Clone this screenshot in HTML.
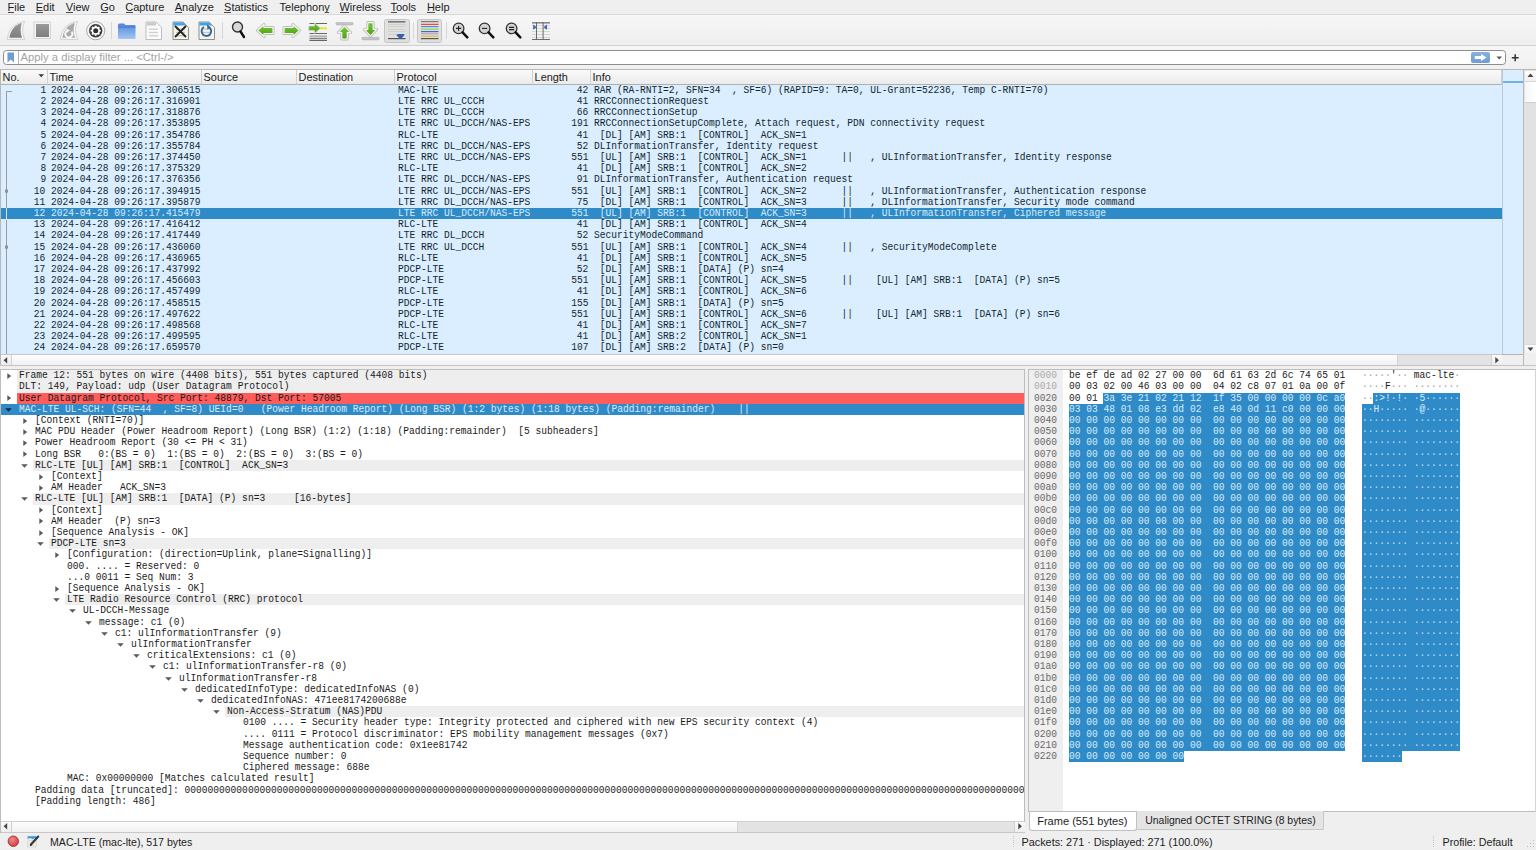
<!DOCTYPE html>
<html><head><meta charset="utf-8"><style>
*{box-sizing:border-box}
html,body{margin:0;padding:0}
body{width:1536px;height:850px;overflow:hidden;position:relative;background:#efefef;font-family:"Liberation Sans",sans-serif;color:#1b1b1b}
.abs{position:absolute}
.mono{font-family:"Liberation Mono",monospace;font-size:10.3px;white-space:pre;transform:scaleX(0.9311);transform-origin:0 0}
.mr{transform-origin:100% 0}
.menu{position:absolute;top:1px;font-size:11px;line-height:13px;color:#1c1c1c}
.menu u{text-decoration:underline;text-decoration-thickness:1px;text-underline-offset:-0.5px;text-decoration-color:#444}
.hdr{position:absolute;top:70px;height:14.5px;background:linear-gradient(#fafafa,#ebebeb);border-right:1px solid #d0d0d0;border-bottom:1px solid #b0b0b0;font-size:10.9px;line-height:15px;padding-left:1.6px;color:#1a1a1a}
.pr{position:absolute;left:1px;width:1501px;height:11.2px;line-height:11.2px}
.pr span{position:absolute;top:0}
.dr{position:absolute;height:11.2px;line-height:11.2px}
.arr{position:absolute;width:0;height:0}
</style></head><body>

<div class="menu" style="left:7.5px">File</div>
<div class="abs" style="left:7.80px;top:12px;width:6.12px;height:1px;background:#4a4a4a"></div>
<div class="menu" style="left:35.699999999999996px">Edit</div>
<div class="abs" style="left:36.00px;top:12px;width:6.74px;height:1px;background:#4a4a4a"></div>
<div class="menu" style="left:65.80000000000001px">View</div>
<div class="abs" style="left:66.10px;top:12px;width:6.74px;height:1px;background:#4a4a4a"></div>
<div class="menu" style="left:100.2px">Go</div>
<div class="abs" style="left:100.50px;top:12px;width:7.96px;height:1px;background:#4a4a4a"></div>
<div class="menu" style="left:125.2px">Capture</div>
<div class="abs" style="left:125.50px;top:12px;width:7.34px;height:1px;background:#4a4a4a"></div>
<div class="menu" style="left:174.70000000000002px">Analyze</div>
<div class="abs" style="left:175.00px;top:12px;width:6.74px;height:1px;background:#4a4a4a"></div>
<div class="menu" style="left:224.1px">Statistics</div>
<div class="abs" style="left:224.40px;top:12px;width:6.74px;height:1px;background:#4a4a4a"></div>
<div class="menu" style="left:279.59999999999997px">Telephony</div>
<div class="abs" style="left:324.55px;top:12px;width:4.90px;height:1px;background:#4a4a4a"></div>
<div class="menu" style="left:339.4px">Wireless</div>
<div class="abs" style="left:339.70px;top:12px;width:9.78px;height:1px;background:#4a4a4a"></div>
<div class="menu" style="left:390.4px">Tools</div>
<div class="abs" style="left:390.70px;top:12px;width:6.12px;height:1px;background:#4a4a4a"></div>
<div class="menu" style="left:426.9px">Help</div>
<div class="abs" style="left:427.20px;top:12px;width:7.34px;height:1px;background:#4a4a4a"></div>
<div class="abs" style="left:0;top:14px;width:1536px;height:1px;background:#d9d9d9"></div>
<div class="abs" style="left:0;top:15px;width:1536px;height:30px;background:linear-gradient(#f7f7f7,#eeeeee)"></div>
<div class="abs" style="left:0;top:44.8px;width:1536px;height:1.4px;background:#d0d0d0"></div>
<svg class="abs" style="left:0;top:0" width="0" height="0"><defs>
<linearGradient id="gfin" x1="0" y1="0" x2="0" y2="1"><stop offset="0" stop-color="#9a9a9a"/><stop offset="1" stop-color="#7e7e7e"/></linearGradient>
<linearGradient id="gfold" x1="0" y1="0" x2="0" y2="1"><stop offset="0" stop-color="#4f86d6"/><stop offset="1" stop-color="#a4c6f6"/></linearGradient>
<linearGradient id="ggreen" x1="0" y1="0" x2="0" y2="1"><stop offset="0" stop-color="#76c83a"/><stop offset="1" stop-color="#4d9e10"/></linearGradient>
<linearGradient id="gbtn" x1="0" y1="0" x2="0" y2="1"><stop offset="0" stop-color="#e6e6e6"/><stop offset="1" stop-color="#dadada"/></linearGradient>
</defs></svg>
<svg class="abs" style="left:7px;top:21px" width="19" height="19" viewBox="0 0 19 19"><path d="M0.4,18.4 C1,9 7,2 17.8,0.3 C15,6 14.8,12 17.8,18.4 Z" fill="#f7f7f7" stroke="#cdcdcd" stroke-width="0.9" stroke-linejoin="round"/><path d="M2.4,16.8 C3.5,9 8,3.5 14.8,1.9 C13.3,7 13.2,12 15.1,16.8 Z" fill="url(#gfin)"/></svg>
<svg class="abs" style="left:33px;top:21px" width="19" height="19" viewBox="0 0 19 19"><rect x="1" y="1" width="16.5" height="16.5" fill="#f4f4f4" stroke="#d4d4d4" stroke-width="1"/><rect x="3" y="3" width="13" height="13" fill="url(#gfin)"/></svg>
<svg class="abs" style="left:60px;top:21px" width="19" height="19" viewBox="0 0 19 19"><path d="M0.4,18.4 C1,9 7,2 17.8,0.3 C15,6 14.8,12 17.8,18.4 Z" fill="#f7f7f7" stroke="#cdcdcd" stroke-width="0.9" stroke-linejoin="round"/><path d="M2.4,16.8 C3.5,9 8,3.5 14.8,1.9 C13.3,7 13.2,12 15.1,16.8 Z" fill="#aaaaaa"/><path d="M11.6,10.6 A3.6,3.6 0 1 1 7.4,9.6" fill="none" stroke="#f8f8f8" stroke-width="2"/><path d="M6,7.6 L10,9.2 L6.6,12 Z" fill="#f8f8f8"/></svg>
<svg class="abs" style="left:85.5px;top:20.5px" width="20" height="20" viewBox="0 0 20 20"><circle cx="9.7" cy="9.7" r="9.1" fill="#f4f4f4" stroke="#a8a8a8" stroke-width="1"/><circle cx="9.7" cy="9.7" r="6.7" fill="#3a3a3a"/><rect x="8.8" y="4.6" width="1.8" height="2.2" fill="#fff" transform="rotate(0 9.7 9.7)"/><rect x="8.8" y="4.6" width="1.8" height="2.2" fill="#fff" transform="rotate(45 9.7 9.7)"/><rect x="8.8" y="4.6" width="1.8" height="2.2" fill="#fff" transform="rotate(90 9.7 9.7)"/><rect x="8.8" y="4.6" width="1.8" height="2.2" fill="#fff" transform="rotate(135 9.7 9.7)"/><rect x="8.8" y="4.6" width="1.8" height="2.2" fill="#fff" transform="rotate(180 9.7 9.7)"/><rect x="8.8" y="4.6" width="1.8" height="2.2" fill="#fff" transform="rotate(225 9.7 9.7)"/><rect x="8.8" y="4.6" width="1.8" height="2.2" fill="#fff" transform="rotate(270 9.7 9.7)"/><rect x="8.8" y="4.6" width="1.8" height="2.2" fill="#fff" transform="rotate(315 9.7 9.7)"/><circle cx="9.7" cy="9.7" r="4.1" fill="#fff"/><circle cx="9.7" cy="9.7" r="2.5" fill="#2e2e2e"/></svg>
<div class="abs" style="left:111px;top:22px;width:1px;height:17px;background:#d6d6d6"></div>
<svg class="abs" style="left:117px;top:22px" width="20" height="18" viewBox="0 0 20 18"><path d="M1,3 Q1,1.5 2.5,1.5 L7,1.5 L8.5,3 L17.5,3 Q18.5,3 18.5,4 L18.5,16 Q18.5,17 17.5,17 L2,17 Q1,17 1,16 Z" fill="url(#gfold)"/><rect x="1" y="4.5" width="17.5" height="1.2" fill="#3f74c6" opacity="0.7"/></svg>
<svg class="abs" style="left:145px;top:21px" width="18" height="19" viewBox="0 0 18 19"><path d="M1,1 L11,1 L16.5,6.5 L16.5,18.5 L1,18.5 Z" fill="#fafafa" stroke="#bdbdbd" stroke-width="1"/><rect x="2" y="1.5" width="9" height="3" fill="#c8c8c8"/><rect x="4" y="7.5" width="9" height="1.4" fill="#cfcfcf"/><rect x="4" y="10.8" width="9" height="1.4" fill="#cfcfcf"/><rect x="4" y="14.1" width="9" height="1.4" fill="#cfcfcf"/></svg>
<svg class="abs" style="left:171.5px;top:21px" width="18" height="19" viewBox="0 0 18 19"><path d="M1,1 L11,1 L16.5,6.5 L16.5,18.5 L1,18.5 Z" fill="#f6f6e6" stroke="#8e8e8e" stroke-width="1"/><path d="M1.5,1.5 L11,1.5 L14,4.5 L1.5,4.5 Z" fill="#3fa3e8"/><rect x="4" y="7.5" width="9" height="1.3" fill="#c6c6c0"/><rect x="4" y="10.8" width="9" height="1.3" fill="#c6c6c0"/><rect x="4" y="14.1" width="9" height="1.3" fill="#c6c6c0"/><path d="M3,5 L14,16 M14,5 L3,16" stroke="#222" stroke-width="1.8"/></svg>
<svg class="abs" style="left:197.5px;top:21px" width="18" height="19" viewBox="0 0 18 19"><path d="M1,1 L11,1 L16.5,6.5 L16.5,18.5 L1,18.5 Z" fill="#f6f6e6" stroke="#8e8e8e" stroke-width="1"/><path d="M1.5,1.5 L11,1.5 L14,4.5 L1.5,4.5 Z" fill="#3fa3e8"/><rect x="4" y="7.5" width="9" height="1.3" fill="#c6c6c0"/><rect x="4" y="10.8" width="9" height="1.3" fill="#c6c6c0"/><rect x="4" y="14.1" width="9" height="1.3" fill="#c6c6c0"/><path d="M11.5,6.5 A4.8,4.8 0 1 1 6,6" fill="none" stroke="#2a5caa" stroke-width="1.8"/><path d="M9,3.5 L12.5,6 L9.5,8.8 Z" fill="#2a5caa"/></svg>
<div class="abs" style="left:222px;top:22px;width:1px;height:17px;background:#d6d6d6"></div>
<svg class="abs" style="left:230px;top:20px" width="16" height="19" viewBox="0 0 16 19"><circle cx="7.5" cy="7" r="5" fill="#d8d8d8" stroke="#333" stroke-width="1.4"/><path d="M10.5,11.5 L14,17" stroke="#111" stroke-width="2.4" stroke-linecap="round"/></svg>
<svg class="abs" style="left:256px;top:23px" width="19" height="15" viewBox="0 0 19 15"><path d="M1.5,7.5 L8,1.5 L8,4.5 L17,4.5 L17,10.5 L8,10.5 L8,13.5 Z" fill="none" stroke="#bcbcbc" stroke-width="3" stroke-linejoin="round"/><path d="M1.5,7.5 L8,1.5 L8,4.5 L17,4.5 L17,10.5 L8,10.5 L8,13.5 Z" fill="url(#ggreen)" stroke="#fafafa" stroke-width="1.2" stroke-linejoin="round"/></svg>
<svg class="abs" style="left:282px;top:23px" width="19" height="15" viewBox="0 0 19 15"><path d="M17.5,7.5 L11,1.5 L11,4.5 L2,4.5 L2,10.5 L11,10.5 L11,13.5 Z" fill="none" stroke="#bcbcbc" stroke-width="3" stroke-linejoin="round"/><path d="M17.5,7.5 L11,1.5 L11,4.5 L2,4.5 L2,10.5 L11,10.5 L11,13.5 Z" fill="url(#ggreen)" stroke="#fafafa" stroke-width="1.2" stroke-linejoin="round"/></svg>
<svg class="abs" style="left:308px;top:21.5px" width="20" height="19" viewBox="0 0 20 19"><rect x="1.5" y="1" width="17.5" height="1" fill="#666"/><rect x="1.5" y="11" width="17.5" height="1" fill="#666"/><rect x="1.5" y="13.5" width="17.5" height="1.2" fill="#9a9a9a"/><rect x="1.5" y="15.8" width="17.5" height="1" fill="#666"/><rect x="1.5" y="17.8" width="17.5" height="1" fill="#444"/><rect x="12" y="5.2" width="7" height="2.2" fill="#f0e040"/><path d="M0.8,4 L6.5,4 L6.5,1 L12.5,6.3 L6.5,11.6 L6.5,8.6 L0.8,8.6 Z" fill="url(#ggreen)" stroke="#d8d8d8" stroke-width="0.8"/></svg>
<svg class="abs" style="left:334.5px;top:21.5px" width="19" height="19" viewBox="0 0 19 19"><rect x="0.8" y="0.4" width="17.4" height="2.6" rx="1.3" fill="#c4c4c4" stroke="#a8a8a8" stroke-width="0.5"/><path d="M9.5,4.2 L15.6,10.6 L12.2,10.6 L12.2,17 L6.8,17 L6.8,10.6 L3.4,10.6 Z" fill="none" stroke="#bcbcbc" stroke-width="3" stroke-linejoin="round"/><path d="M9.5,4.2 L15.6,10.6 L12.2,10.6 L12.2,17 L6.8,17 L6.8,10.6 L3.4,10.6 Z" fill="url(#ggreen)" stroke="#fafafa" stroke-width="1.1" stroke-linejoin="round"/></svg>
<svg class="abs" style="left:361px;top:21px" width="19" height="20" viewBox="0 0 19 20"><path d="M9.5,14.8 L15.6,8.4 L12.2,8.4 L12.2,1.6 L6.8,1.6 L6.8,8.4 L3.4,8.4 Z" fill="none" stroke="#bcbcbc" stroke-width="3" stroke-linejoin="round"/><path d="M9.5,14.8 L15.6,8.4 L12.2,8.4 L12.2,1.6 L6.8,1.6 L6.8,8.4 L3.4,8.4 Z" fill="url(#ggreen)" stroke="#fafafa" stroke-width="1.1" stroke-linejoin="round"/><rect x="0.8" y="16.3" width="17.4" height="2.6" rx="1.3" fill="#c4c4c4" stroke="#a8a8a8" stroke-width="0.5"/></svg>
<div class="abs" style="left:384px;top:18.5px;width:25.5px;height:24px;background:linear-gradient(#e2e2e2,#dedede);border:1px solid #c4c4c4;border-radius:2.5px"></div>
<svg class="abs" style="left:388px;top:21px" width="18" height="19" viewBox="0 0 18 19"><rect x="0" y="0" width="17.5" height="1.6" fill="#777"/><rect x="0" y="3" width="17.5" height="0.8" fill="#cfcfc8"/><rect x="0" y="5" width="17.5" height="0.8" fill="#cfcfc8"/><rect x="0" y="8" width="17.5" height="0.8" fill="#cfcfc8"/><rect x="0" y="10" width="17.5" height="0.8" fill="#cfcfc8"/><rect x="0" y="13" width="17.5" height="0.8" fill="#cfcfc8"/><rect x="0" y="17" width="17.5" height="1.2" fill="#555"/><path d="M8.5,14.3 Q8.5,13 11,13 L15,13 Q16.5,13 16.5,14 L13.5,17.5 L11.5,17.5 Z" fill="#2f63b0"/></svg>
<div class="abs" style="left:413px;top:22px;width:1px;height:17px;background:#d6d6d6"></div>
<div class="abs" style="left:416.5px;top:18.5px;width:25.5px;height:24px;background:linear-gradient(#e2e2e2,#dedede);border:1px solid #c4c4c4;border-radius:2.5px"></div>
<svg class="abs" style="left:420.5px;top:21px" width="18" height="19" viewBox="0 0 18 19"><rect x="0" y="0" width="17.5" height="1.2" fill="#777"/><rect x="0" y="2.8" width="17.5" height="1.2" fill="#e84848"/><rect x="0" y="5" width="17.5" height="1.2" fill="#5c8ad0"/><rect x="0" y="7.6" width="17.5" height="1.2" fill="#8ad850"/><rect x="0" y="10" width="17.5" height="1.2" fill="#3a6cc0"/><rect x="0" y="12.2" width="17.5" height="1.2" fill="#b8a0c8"/><rect x="0" y="14.6" width="17.5" height="1.2" fill="#e8b838"/><rect x="0" y="17" width="17.5" height="1.2" fill="#555"/></svg>
<div class="abs" style="left:445.5px;top:22px;width:1px;height:17px;background:#d6d6d6"></div>
<svg class="abs" style="left:451.6px;top:21px" width="18" height="18" viewBox="0 0 18 18"><circle cx="6.6" cy="7.4" r="5.3" fill="#d4d4d4" stroke="#333" stroke-width="1.3"/><path d="M4,7.4 L9.2,7.4 M6.6,4.8 L6.6,10" stroke="#222" stroke-width="1.1"/><path d="M10.6,11.4 L15.3,16.3" stroke="#111" stroke-width="2.5" stroke-linecap="round"/></svg>
<svg class="abs" style="left:477.9px;top:21px" width="18" height="18" viewBox="0 0 18 18"><circle cx="6.6" cy="7.4" r="5.3" fill="#d4d4d4" stroke="#333" stroke-width="1.3"/><path d="M4,7.4 L9.2,7.4" stroke="#222" stroke-width="1.1"/><path d="M10.6,11.4 L15.3,16.3" stroke="#111" stroke-width="2.5" stroke-linecap="round"/></svg>
<svg class="abs" style="left:504.5px;top:21px" width="18" height="18" viewBox="0 0 18 18"><circle cx="6.6" cy="7.4" r="5.3" fill="#d4d4d4" stroke="#333" stroke-width="1.3"/><path d="M4,6.4 L9.2,6.4 M4,8.6 L9.2,8.6" stroke="#222" stroke-width="1.1"/><path d="M10.6,11.4 L15.3,16.3" stroke="#111" stroke-width="2.5" stroke-linecap="round"/></svg>
<svg class="abs" style="left:531.5px;top:21.5px" width="18" height="18.5" viewBox="0 0 18 18.5"><rect x="0" y="0" width="18" height="1.6" fill="#8a8a8a"/><rect x="0" y="3.2" width="18" height="0.8" fill="#d0d0c8"/><rect x="0" y="6" width="18" height="0.8" fill="#d0d0c8"/><rect x="0" y="9" width="18" height="0.8" fill="#d0d0c8"/><rect x="0" y="12" width="18" height="0.8" fill="#d0d0c8"/><rect x="0" y="15" width="18" height="0.8" fill="#d0d0c8"/><rect x="0" y="17" width="18" height="1.4" fill="#6a6a6a"/><rect x="4" y="0" width="1" height="18" fill="#6a6a6a"/><rect x="10.6" y="0" width="1" height="18" fill="#6a6a6a"/><path d="M1.2,2.6 L4.6,5.2 L1.2,7.8 Z" fill="#2d66c2"/><path d="M15,2.6 L11.6,5.2 L15,7.8 Z" fill="#2d66c2"/></svg>
<div class="abs" style="left:0;top:46px;width:1536px;height:23px;background:linear-gradient(#f6f6f6,#f0f0f0)"></div>
<div class="abs" style="left:3px;top:50px;width:1503px;height:15px;background:#fff;border:1px solid #8c8c8c;border-radius:3.5px"></div>
<div class="abs" style="left:18px;top:51px;width:1px;height:13px;background:#b4b4b4"></div>
<svg class="abs" style="left:7px;top:52px" width="8" height="11" viewBox="0 0 8 11"><path d="M0.5,0.5 L7,0.5 L7,10.5 L3.75,7.5 L0.5,10.5 Z" fill="#6f9bd6"/></svg>
<div class="abs" style="left:20.5px;top:49.6px;font-size:11.25px;line-height:14px;color:#a3a3a3">Apply a display filter ... &lt;Ctrl-/&gt;</div>
<div class="abs" style="left:1471.3px;top:51.8px;width:19px;height:11.3px;background:linear-gradient(#89b0e0,#6f9cd6);border-radius:2px"></div>
<svg class="abs" style="left:1474px;top:53px" width="14" height="9" viewBox="0 0 14 9"><path d="M0.8,3 L7,3 L7,1 L12.5,4.5 L7,8 L7,6 L0.8,6 Z" fill="#fff"/></svg>
<svg class="abs" style="left:1496px;top:55.5px" width="7" height="4" viewBox="0 0 7 4"><path d="M0.5,0.5 L6,0.5 L3.25,3.5 Z" fill="#555"/></svg>
<svg class="abs" style="left:1511px;top:54px" width="8.5" height="8" viewBox="0 0 8.5 8"><path d="M4.2,0.3 L4.2,7.3 M0.8,3.8 L7.6,3.8" stroke="#333" stroke-width="1.5"/></svg>
<div class="abs" style="left:0;top:69px;width:1536px;height:1px;background:#b8b8b8"></div>
<div class="abs" style="left:0;top:70px;width:1px;height:296px;background:#b8b8b8"></div>
<div class="abs" style="left:1px;top:84.5px;width:1501px;height:269.5px;background:#daeeff"></div>
<div class="hdr" style="left:1px;width:47px">No.</div>
<div class="hdr" style="left:48px;width:154px">Time</div>
<div class="hdr" style="left:202px;width:95px">Source</div>
<div class="hdr" style="left:297px;width:98px">Destination</div>
<div class="hdr" style="left:395px;width:138px">Protocol</div>
<div class="hdr" style="left:533px;width:58px">Length</div>
<div class="hdr" style="left:591px;width:911px">Info</div>
<svg class="abs" style="left:38px;top:74px" width="7" height="4" viewBox="0 0 7 4"><path d="M0.5,0.3 L6,0.3 L3.25,3.3 Z" fill="#333"/></svg>
<div class="pr" style="top:84.80px;color:#12272e;">
<span class="mono mr" style="right:1456.2px">1</span>
<span class="mono" style="left:49.5px">2024-04-28 09:26:17.306515</span>
<span class="mono" style="left:396.5px">MAC-LTE</span>
<span class="mono mr" style="right:913.7px">42</span>
<span class="mono" style="left:592.6px">RAR (RA-RNTI=2, SFN=34  , SF=6) (RAPID=9: TA=0, UL-Grant=52236, Temp C-RNTI=70)</span>
</div>
<div class="pr" style="top:96.00px;color:#12272e;">
<span class="mono mr" style="right:1456.2px">2</span>
<span class="mono" style="left:49.5px">2024-04-28 09:26:17.316901</span>
<span class="mono" style="left:396.5px">LTE RRC UL_CCCH</span>
<span class="mono mr" style="right:913.7px">41</span>
<span class="mono" style="left:592.6px">RRCConnectionRequest</span>
</div>
<div class="pr" style="top:107.20px;color:#12272e;">
<span class="mono mr" style="right:1456.2px">3</span>
<span class="mono" style="left:49.5px">2024-04-28 09:26:17.318876</span>
<span class="mono" style="left:396.5px">LTE RRC DL_CCCH</span>
<span class="mono mr" style="right:913.7px">66</span>
<span class="mono" style="left:592.6px">RRCConnectionSetup</span>
</div>
<div class="pr" style="top:118.40px;color:#12272e;">
<span class="mono mr" style="right:1456.2px">4</span>
<span class="mono" style="left:49.5px">2024-04-28 09:26:17.353895</span>
<span class="mono" style="left:396.5px">LTE RRC UL_DCCH/NAS-EPS</span>
<span class="mono mr" style="right:913.7px">191</span>
<span class="mono" style="left:592.6px">RRCConnectionSetupComplete, Attach request, PDN connectivity request</span>
</div>
<div class="pr" style="top:129.60px;color:#12272e;">
<span class="mono mr" style="right:1456.2px">5</span>
<span class="mono" style="left:49.5px">2024-04-28 09:26:17.354786</span>
<span class="mono" style="left:396.5px">RLC-LTE</span>
<span class="mono mr" style="right:913.7px">41</span>
<span class="mono" style="left:592.6px"> [DL] [AM] SRB:1  [CONTROL]  ACK_SN=1</span>
</div>
<div class="pr" style="top:140.80px;color:#12272e;">
<span class="mono mr" style="right:1456.2px">6</span>
<span class="mono" style="left:49.5px">2024-04-28 09:26:17.355784</span>
<span class="mono" style="left:396.5px">LTE RRC DL_DCCH/NAS-EPS</span>
<span class="mono mr" style="right:913.7px">52</span>
<span class="mono" style="left:592.6px">DLInformationTransfer, Identity request</span>
</div>
<div class="pr" style="top:152.00px;color:#12272e;">
<span class="mono mr" style="right:1456.2px">7</span>
<span class="mono" style="left:49.5px">2024-04-28 09:26:17.374450</span>
<span class="mono" style="left:396.5px">LTE RRC UL_DCCH/NAS-EPS</span>
<span class="mono mr" style="right:913.7px">551</span>
<span class="mono" style="left:592.6px"> [UL] [AM] SRB:1  [CONTROL]  ACK_SN=1      ||   , ULInformationTransfer, Identity response</span>
</div>
<div class="pr" style="top:163.20px;color:#12272e;">
<span class="mono mr" style="right:1456.2px">8</span>
<span class="mono" style="left:49.5px">2024-04-28 09:26:17.375329</span>
<span class="mono" style="left:396.5px">RLC-LTE</span>
<span class="mono mr" style="right:913.7px">41</span>
<span class="mono" style="left:592.6px"> [DL] [AM] SRB:1  [CONTROL]  ACK_SN=2</span>
</div>
<div class="pr" style="top:174.40px;color:#12272e;">
<span class="mono mr" style="right:1456.2px">9</span>
<span class="mono" style="left:49.5px">2024-04-28 09:26:17.376356</span>
<span class="mono" style="left:396.5px">LTE RRC DL_DCCH/NAS-EPS</span>
<span class="mono mr" style="right:913.7px">91</span>
<span class="mono" style="left:592.6px">DLInformationTransfer, Authentication request</span>
</div>
<div class="pr" style="top:185.60px;color:#12272e;">
<span class="mono mr" style="right:1456.2px">10</span>
<span class="mono" style="left:49.5px">2024-04-28 09:26:17.394915</span>
<span class="mono" style="left:396.5px">LTE RRC UL_DCCH/NAS-EPS</span>
<span class="mono mr" style="right:913.7px">551</span>
<span class="mono" style="left:592.6px"> [UL] [AM] SRB:1  [CONTROL]  ACK_SN=2      ||   , ULInformationTransfer, Authentication response</span>
</div>
<div class="pr" style="top:196.80px;color:#12272e;">
<span class="mono mr" style="right:1456.2px">11</span>
<span class="mono" style="left:49.5px">2024-04-28 09:26:17.395879</span>
<span class="mono" style="left:396.5px">LTE RRC DL_DCCH/NAS-EPS</span>
<span class="mono mr" style="right:913.7px">75</span>
<span class="mono" style="left:592.6px"> [DL] [AM] SRB:1  [CONTROL]  ACK_SN=3      ||   , DLInformationTransfer, Security mode command</span>
</div>
<div class="pr" style="top:208.00px;background:#2f8ac8;color:#d8ecfa;">
<span class="mono mr" style="right:1456.2px">12</span>
<span class="mono" style="left:49.5px">2024-04-28 09:26:17.415479</span>
<span class="mono" style="left:396.5px">LTE RRC UL_DCCH/NAS-EPS</span>
<span class="mono mr" style="right:913.7px">551</span>
<span class="mono" style="left:592.6px"> [UL] [AM] SRB:1  [CONTROL]  ACK_SN=3      ||   , ULInformationTransfer, Ciphered message</span>
</div>
<div class="pr" style="top:219.20px;color:#12272e;">
<span class="mono mr" style="right:1456.2px">13</span>
<span class="mono" style="left:49.5px">2024-04-28 09:26:17.416412</span>
<span class="mono" style="left:396.5px">RLC-LTE</span>
<span class="mono mr" style="right:913.7px">41</span>
<span class="mono" style="left:592.6px"> [DL] [AM] SRB:1  [CONTROL]  ACK_SN=4</span>
</div>
<div class="pr" style="top:230.40px;color:#12272e;">
<span class="mono mr" style="right:1456.2px">14</span>
<span class="mono" style="left:49.5px">2024-04-28 09:26:17.417449</span>
<span class="mono" style="left:396.5px">LTE RRC DL_DCCH</span>
<span class="mono mr" style="right:913.7px">52</span>
<span class="mono" style="left:592.6px">SecurityModeCommand</span>
</div>
<div class="pr" style="top:241.60px;color:#12272e;">
<span class="mono mr" style="right:1456.2px">15</span>
<span class="mono" style="left:49.5px">2024-04-28 09:26:17.436060</span>
<span class="mono" style="left:396.5px">LTE RRC UL_DCCH</span>
<span class="mono mr" style="right:913.7px">551</span>
<span class="mono" style="left:592.6px"> [UL] [AM] SRB:1  [CONTROL]  ACK_SN=4      ||   , SecurityModeComplete</span>
</div>
<div class="pr" style="top:252.80px;color:#12272e;">
<span class="mono mr" style="right:1456.2px">16</span>
<span class="mono" style="left:49.5px">2024-04-28 09:26:17.436965</span>
<span class="mono" style="left:396.5px">RLC-LTE</span>
<span class="mono mr" style="right:913.7px">41</span>
<span class="mono" style="left:592.6px"> [DL] [AM] SRB:1  [CONTROL]  ACK_SN=5</span>
</div>
<div class="pr" style="top:264.00px;color:#12272e;">
<span class="mono mr" style="right:1456.2px">17</span>
<span class="mono" style="left:49.5px">2024-04-28 09:26:17.437992</span>
<span class="mono" style="left:396.5px">PDCP-LTE</span>
<span class="mono mr" style="right:913.7px">52</span>
<span class="mono" style="left:592.6px"> [DL] [AM] SRB:1  [DATA] (P) sn=4</span>
</div>
<div class="pr" style="top:275.20px;color:#12272e;">
<span class="mono mr" style="right:1456.2px">18</span>
<span class="mono" style="left:49.5px">2024-04-28 09:26:17.456603</span>
<span class="mono" style="left:396.5px">PDCP-LTE</span>
<span class="mono mr" style="right:913.7px">551</span>
<span class="mono" style="left:592.6px"> [UL] [AM] SRB:1  [CONTROL]  ACK_SN=5      ||    [UL] [AM] SRB:1  [DATA] (P) sn=5</span>
</div>
<div class="pr" style="top:286.40px;color:#12272e;">
<span class="mono mr" style="right:1456.2px">19</span>
<span class="mono" style="left:49.5px">2024-04-28 09:26:17.457499</span>
<span class="mono" style="left:396.5px">RLC-LTE</span>
<span class="mono mr" style="right:913.7px">41</span>
<span class="mono" style="left:592.6px"> [DL] [AM] SRB:1  [CONTROL]  ACK_SN=6</span>
</div>
<div class="pr" style="top:297.60px;color:#12272e;">
<span class="mono mr" style="right:1456.2px">20</span>
<span class="mono" style="left:49.5px">2024-04-28 09:26:17.458515</span>
<span class="mono" style="left:396.5px">PDCP-LTE</span>
<span class="mono mr" style="right:913.7px">155</span>
<span class="mono" style="left:592.6px"> [DL] [AM] SRB:1  [DATA] (P) sn=5</span>
</div>
<div class="pr" style="top:308.80px;color:#12272e;">
<span class="mono mr" style="right:1456.2px">21</span>
<span class="mono" style="left:49.5px">2024-04-28 09:26:17.497622</span>
<span class="mono" style="left:396.5px">PDCP-LTE</span>
<span class="mono mr" style="right:913.7px">551</span>
<span class="mono" style="left:592.6px"> [UL] [AM] SRB:1  [CONTROL]  ACK_SN=6      ||    [UL] [AM] SRB:1  [DATA] (P) sn=6</span>
</div>
<div class="pr" style="top:320.00px;color:#12272e;">
<span class="mono mr" style="right:1456.2px">22</span>
<span class="mono" style="left:49.5px">2024-04-28 09:26:17.498568</span>
<span class="mono" style="left:396.5px">RLC-LTE</span>
<span class="mono mr" style="right:913.7px">41</span>
<span class="mono" style="left:592.6px"> [DL] [AM] SRB:1  [CONTROL]  ACK_SN=7</span>
</div>
<div class="pr" style="top:331.20px;color:#12272e;">
<span class="mono mr" style="right:1456.2px">23</span>
<span class="mono" style="left:49.5px">2024-04-28 09:26:17.499595</span>
<span class="mono" style="left:396.5px">RLC-LTE</span>
<span class="mono mr" style="right:913.7px">41</span>
<span class="mono" style="left:592.6px"> [DL] [AM] SRB:2  [CONTROL]  ACK_SN=1</span>
</div>
<div class="pr" style="top:342.40px;color:#12272e;">
<span class="mono mr" style="right:1456.2px">24</span>
<span class="mono" style="left:49.5px">2024-04-28 09:26:17.659570</span>
<span class="mono" style="left:396.5px">PDCP-LTE</span>
<span class="mono mr" style="right:913.7px">107</span>
<span class="mono" style="left:592.6px"> [DL] [AM] SRB:2  [DATA] (P) sn=0</span>
</div>
<div class="abs" style="left:6.2px;top:90.5px;width:1px;height:263.5px;background:#9c9c9c"></div>
<div class="abs" style="left:6.2px;top:90.5px;width:5.5px;height:1px;background:#9c9c9c"></div>
<div class="abs" style="left:5.5px;top:207.5px;width:1px;height:12px;background:#cfe3f3"></div>
<div class="abs" style="left:4.8px;top:189.39999999999998px;width:3.6px;height:3.6px;border-radius:50%;background:#8f8f8f"></div>
<div class="abs" style="left:4.8px;top:245.39999999999998px;width:3.6px;height:3.6px;border-radius:50%;background:#8f8f8f"></div>
<div class="abs" style="left:1501.5px;top:70px;width:1.5px;height:284px;background:#bcc8d4"></div>
<div class="abs" style="left:1503px;top:70px;width:20px;height:284px;background:#daeeff"></div>
<div class="abs" style="left:1503px;top:81px;width:20px;height:2px;background:#6fb0e8"></div>
<div class="abs" style="left:1502px;top:353.5px;width:22px;height:1px;background:#b4b4b4"></div>
<div class="abs" style="left:1523px;top:70px;width:1px;height:296px;background:#b8b8b8"></div>
<div class="abs" style="left:1524px;top:70px;width:12px;height:284px;background:#e2e2e2"></div>
<div class="abs" style="left:1524.5px;top:70.5px;width:11px;height:11px;background:linear-gradient(#fdfdfd,#f0f0f0);border-bottom:1px solid #d8d8d8"></div>
<svg class="abs" style="left:1526.5px;top:73px" width="7" height="5" viewBox="0 0 7 5"><path d="M0.5,4 L6.5,4 L3.5,0.5 Z" fill="#444"/></svg>
<div class="abs" style="left:1524.5px;top:81.5px;width:11px;height:21px;background:linear-gradient(90deg,#f6f6f6,#fff);border-bottom:1px solid #cfcfcf"></div>
<div class="abs" style="left:1524.5px;top:343.5px;width:11px;height:10.5px;background:linear-gradient(#fdfdfd,#f0f0f0);border-top:1px solid #d8d8d8"></div>
<svg class="abs" style="left:1526.5px;top:347px" width="7" height="5" viewBox="0 0 7 5"><path d="M0.5,0.5 L6.5,0.5 L3.5,4 Z" fill="#444"/></svg>
<div class="abs" style="left:1px;top:354px;width:1501px;height:1px;background:#c8c8c8"></div>
<div class="abs" style="left:1px;top:355px;width:1501px;height:10px;background:#e3e3e3"></div>
<div class="abs" style="left:1px;top:355px;width:11px;height:10px;background:linear-gradient(#fafafa,#ededed);border-right:1px solid #d0d0d0"></div>
<svg class="abs" style="left:3px;top:356.6px" width="5" height="7" viewBox="0 0 5 7"><path d="M4.2,0.1 L4.2,6.5 L0.6,3.3 Z" fill="#444"/></svg>
<div class="abs" style="left:12px;top:355px;width:1386px;height:10px;background:linear-gradient(#fdfdfd,#f1f1f1);border-right:1px solid #d4d4d4"></div>
<div class="abs" style="left:1491px;top:355px;width:11px;height:10px;background:linear-gradient(#fafafa,#ededed);border-left:1px solid #d0d0d0"></div>
<svg class="abs" style="left:1494.5px;top:356.6px" width="5" height="7" viewBox="0 0 5 7"><path d="M0.3,0.1 L0.3,6.5 L3.9,3.3 Z" fill="#444"/></svg>
<div class="abs" style="left:0;top:365px;width:1536px;height:1px;background:#c4c4c4"></div>
<div class="abs" style="left:0;top:369px;width:1025px;height:463px;background:#fff;border:1px solid #bdbdbd;border-bottom:none;overflow:hidden">
<div class="dr" style="left:16px;top:0.20px;width:1100px;background:#eeeeee"></div>
<svg class="abs" style="left:5.5px;top:2.8000000000000003px" width="5" height="7"><path d="M0.3,0.2 L4.2,3.1 L0.3,6.0 Z" fill="#5a5a5a"/></svg>
<div class="dr mono" style="left:18px;top:0.20px;color:#1a1a1a">Frame 12: 551 bytes on wire (4408 bits), 551 bytes captured (4408 bits)</div>
<div class="dr" style="left:16px;top:11.40px;width:1100px;background:#eeeeee"></div>
<div class="dr mono" style="left:18px;top:11.40px;color:#1a1a1a">DLT: 149, Payload: udp (User Datagram Protocol)</div>
<div class="dr" style="left:16px;top:22.60px;width:1100px;background:#ff5c5c"></div>
<svg class="abs" style="left:5.5px;top:25.2px" width="5" height="7"><path d="M0.3,0.2 L4.2,3.1 L0.3,6.0 Z" fill="#5a5a5a"/></svg>
<div class="dr mono" style="left:18px;top:22.60px;color:#1a1a1a">User Datagram Protocol, Src Port: 48879, Dst Port: 57005</div>
<div class="dr" style="left:0;top:33.80px;width:1030px;background:#2f8ac8"></div>
<svg class="abs" style="left:4.3px;top:37.8px" width="8" height="5"><path d="M0.2,0.2 L6.8,0.2 L3.5,3.8 Z" fill="#13263a"/></svg>
<div class="dr mono" style="left:18px;top:33.80px;color:#d8ecfa">MAC-LTE UL-SCH: (SFN=44  , SF=8) UEId=0   (Power Headroom Report) (Long BSR) (1:2 bytes) (1:18 bytes) (Padding:remainder)    ||</div>
<svg class="abs" style="left:21.5px;top:47.6px" width="5" height="7"><path d="M0.3,0.2 L4.2,3.1 L0.3,6.0 Z" fill="#5a5a5a"/></svg>
<div class="dr mono" style="left:34px;top:45.00px;color:#1a1a1a">[Context (RNTI=70)]</div>
<svg class="abs" style="left:21.5px;top:58.800000000000004px" width="5" height="7"><path d="M0.3,0.2 L4.2,3.1 L0.3,6.0 Z" fill="#5a5a5a"/></svg>
<div class="dr mono" style="left:34px;top:56.20px;color:#1a1a1a">MAC PDU Header (Power Headroom Report) (Long BSR) (1:2) (1:18) (Padding:remainder)  [5 subheaders]</div>
<svg class="abs" style="left:21.5px;top:69.99999999999999px" width="5" height="7"><path d="M0.3,0.2 L4.2,3.1 L0.3,6.0 Z" fill="#5a5a5a"/></svg>
<div class="dr mono" style="left:34px;top:67.40px;color:#1a1a1a">Power Headroom Report (30 &lt;= PH &lt; 31)</div>
<svg class="abs" style="left:21.5px;top:81.19999999999999px" width="5" height="7"><path d="M0.3,0.2 L4.2,3.1 L0.3,6.0 Z" fill="#5a5a5a"/></svg>
<div class="dr mono" style="left:34px;top:78.60px;color:#1a1a1a">Long BSR   0:(BS = 0)  1:(BS = 0)  2:(BS = 0)  3:(BS = 0)</div>
<div class="dr" style="left:32px;top:89.80px;width:1100px;background:#eeeeee"></div>
<svg class="abs" style="left:20.3px;top:93.8px" width="8" height="5"><path d="M0.2,0.2 L6.8,0.2 L3.5,3.8 Z" fill="#5a5a5a"/></svg>
<div class="dr mono" style="left:34px;top:89.80px;color:#1a1a1a">RLC-LTE [UL] [AM] SRB:1  [CONTROL]  ACK_SN=3</div>
<svg class="abs" style="left:37.5px;top:103.6px" width="5" height="7"><path d="M0.3,0.2 L4.2,3.1 L0.3,6.0 Z" fill="#5a5a5a"/></svg>
<div class="dr mono" style="left:50px;top:101.00px;color:#1a1a1a">[Context]</div>
<svg class="abs" style="left:37.5px;top:114.8px" width="5" height="7"><path d="M0.3,0.2 L4.2,3.1 L0.3,6.0 Z" fill="#5a5a5a"/></svg>
<div class="dr mono" style="left:50px;top:112.20px;color:#1a1a1a">AM Header   ACK_SN=3</div>
<div class="dr" style="left:32px;top:123.40px;width:1100px;background:#eeeeee"></div>
<svg class="abs" style="left:20.3px;top:127.39999999999999px" width="8" height="5"><path d="M0.2,0.2 L6.8,0.2 L3.5,3.8 Z" fill="#5a5a5a"/></svg>
<div class="dr mono" style="left:34px;top:123.40px;color:#1a1a1a">RLC-LTE [UL] [AM] SRB:1  [DATA] (P) sn=3     [16-bytes]</div>
<svg class="abs" style="left:37.5px;top:137.19999999999996px" width="5" height="7"><path d="M0.3,0.2 L4.2,3.1 L0.3,6.0 Z" fill="#5a5a5a"/></svg>
<div class="dr mono" style="left:50px;top:134.60px;color:#1a1a1a">[Context]</div>
<svg class="abs" style="left:37.5px;top:148.39999999999998px" width="5" height="7"><path d="M0.3,0.2 L4.2,3.1 L0.3,6.0 Z" fill="#5a5a5a"/></svg>
<div class="dr mono" style="left:50px;top:145.80px;color:#1a1a1a">AM Header  (P) sn=3</div>
<svg class="abs" style="left:37.5px;top:159.59999999999997px" width="5" height="7"><path d="M0.3,0.2 L4.2,3.1 L0.3,6.0 Z" fill="#5a5a5a"/></svg>
<div class="dr mono" style="left:50px;top:157.00px;color:#1a1a1a">[Sequence Analysis - OK]</div>
<div class="dr" style="left:48px;top:168.20px;width:1100px;background:#eeeeee"></div>
<svg class="abs" style="left:36.3px;top:172.2px" width="8" height="5"><path d="M0.2,0.2 L6.8,0.2 L3.5,3.8 Z" fill="#5a5a5a"/></svg>
<div class="dr mono" style="left:50px;top:168.20px;color:#1a1a1a">PDCP-LTE sn=3</div>
<svg class="abs" style="left:53.5px;top:181.99999999999997px" width="5" height="7"><path d="M0.3,0.2 L4.2,3.1 L0.3,6.0 Z" fill="#5a5a5a"/></svg>
<div class="dr mono" style="left:66px;top:179.40px;color:#1a1a1a">[Configuration: (direction=Uplink, plane=Signalling)]</div>
<div class="dr mono" style="left:66px;top:190.60px;color:#1a1a1a">000. .... = Reserved: 0</div>
<div class="dr mono" style="left:66px;top:201.80px;color:#1a1a1a">...0 0011 = Seq Num: 3</div>
<svg class="abs" style="left:53.5px;top:215.59999999999997px" width="5" height="7"><path d="M0.3,0.2 L4.2,3.1 L0.3,6.0 Z" fill="#5a5a5a"/></svg>
<div class="dr mono" style="left:66px;top:213.00px;color:#1a1a1a">[Sequence Analysis - OK]</div>
<div class="dr" style="left:64px;top:224.20px;width:1100px;background:#eeeeee"></div>
<svg class="abs" style="left:52.3px;top:228.2px" width="8" height="5"><path d="M0.2,0.2 L6.8,0.2 L3.5,3.8 Z" fill="#5a5a5a"/></svg>
<div class="dr mono" style="left:66px;top:224.20px;color:#1a1a1a">LTE Radio Resource Control (RRC) protocol</div>
<svg class="abs" style="left:68.3px;top:239.39999999999998px" width="8" height="5"><path d="M0.2,0.2 L6.8,0.2 L3.5,3.8 Z" fill="#5a5a5a"/></svg>
<div class="dr mono" style="left:82px;top:235.40px;color:#1a1a1a">UL-DCCH-Message</div>
<svg class="abs" style="left:84.3px;top:250.59999999999997px" width="8" height="5"><path d="M0.2,0.2 L6.8,0.2 L3.5,3.8 Z" fill="#5a5a5a"/></svg>
<div class="dr mono" style="left:98px;top:246.60px;color:#1a1a1a">message: c1 (0)</div>
<svg class="abs" style="left:100.3px;top:261.79999999999995px" width="8" height="5"><path d="M0.2,0.2 L6.8,0.2 L3.5,3.8 Z" fill="#5a5a5a"/></svg>
<div class="dr mono" style="left:114px;top:257.80px;color:#1a1a1a">c1: ulInformationTransfer (9)</div>
<svg class="abs" style="left:116.3px;top:272.99999999999994px" width="8" height="5"><path d="M0.2,0.2 L6.8,0.2 L3.5,3.8 Z" fill="#5a5a5a"/></svg>
<div class="dr mono" style="left:130px;top:269.00px;color:#1a1a1a">ulInformationTransfer</div>
<svg class="abs" style="left:132.3px;top:284.2px" width="8" height="5"><path d="M0.2,0.2 L6.8,0.2 L3.5,3.8 Z" fill="#5a5a5a"/></svg>
<div class="dr mono" style="left:146px;top:280.20px;color:#1a1a1a">criticalExtensions: c1 (0)</div>
<svg class="abs" style="left:148.3px;top:295.4px" width="8" height="5"><path d="M0.2,0.2 L6.8,0.2 L3.5,3.8 Z" fill="#5a5a5a"/></svg>
<div class="dr mono" style="left:162px;top:291.40px;color:#1a1a1a">c1: ulInformationTransfer-r8 (0)</div>
<svg class="abs" style="left:164.3px;top:306.59999999999997px" width="8" height="5"><path d="M0.2,0.2 L6.8,0.2 L3.5,3.8 Z" fill="#5a5a5a"/></svg>
<div class="dr mono" style="left:178px;top:302.60px;color:#1a1a1a">ulInformationTransfer-r8</div>
<svg class="abs" style="left:180.3px;top:317.79999999999995px" width="8" height="5"><path d="M0.2,0.2 L6.8,0.2 L3.5,3.8 Z" fill="#5a5a5a"/></svg>
<div class="dr mono" style="left:194px;top:313.80px;color:#1a1a1a">dedicatedInfoType: dedicatedInfoNAS (0)</div>
<svg class="abs" style="left:196.3px;top:328.99999999999994px" width="8" height="5"><path d="M0.2,0.2 L6.8,0.2 L3.5,3.8 Z" fill="#5a5a5a"/></svg>
<div class="dr mono" style="left:210px;top:325.00px;color:#1a1a1a">dedicatedInfoNAS: 471ee8174200688e</div>
<div class="dr" style="left:224px;top:336.20px;width:1100px;background:#eeeeee"></div>
<svg class="abs" style="left:212.3px;top:340.2px" width="8" height="5"><path d="M0.2,0.2 L6.8,0.2 L3.5,3.8 Z" fill="#5a5a5a"/></svg>
<div class="dr mono" style="left:226px;top:336.20px;color:#1a1a1a">Non-Access-Stratum (NAS)PDU</div>
<div class="dr mono" style="left:242px;top:347.40px;color:#1a1a1a">0100 .... = Security header type: Integrity protected and ciphered with new EPS security context (4)</div>
<div class="dr mono" style="left:242px;top:358.60px;color:#1a1a1a">.... 0111 = Protocol discriminator: EPS mobility management messages (0x7)</div>
<div class="dr mono" style="left:242px;top:369.80px;color:#1a1a1a">Message authentication code: 0x1ee81742</div>
<div class="dr mono" style="left:242px;top:381.00px;color:#1a1a1a">Sequence number: 0</div>
<div class="dr mono" style="left:242px;top:392.20px;color:#1a1a1a">Ciphered message: 688e</div>
<div class="dr mono" style="left:66px;top:403.40px;color:#1a1a1a">MAC: 0x00000000 [Matches calculated result]</div>
<div class="dr mono" style="left:34px;top:414.60px;color:#1a1a1a">Padding data [truncated]: 000000000000000000000000000000000000000000000000000000000000000000000000000000000000000000000000000000000000000000000000000000000000000000000000000000000000000000000000000000000000000000000000000000000000000000000000000000000000000000000000000000000000000000000000000000000000000000000000000000000000</div>
<div class="dr mono" style="left:34px;top:425.80px;color:#1a1a1a">[Padding length: 486]</div>
</div>
<div class="abs" style="left:1px;top:820.5px;width:1024px;height:1px;background:#d0d0d0"></div>
<div class="abs" style="left:1px;top:821.5px;width:1024px;height:10.5px;background:#e3e3e3"></div>
<div class="abs" style="left:1px;top:821.5px;width:11px;height:10.5px;background:linear-gradient(#fafafa,#ededed);border-right:1px solid #d0d0d0"></div>
<svg class="abs" style="left:3px;top:822.7px" width="5" height="7" viewBox="0 0 5 7"><path d="M4.2,0.1 L4.2,6.5 L0.6,3.3 Z" fill="#444"/></svg>
<div class="abs" style="left:12px;top:821.5px;width:726px;height:10.5px;background:linear-gradient(#fdfdfd,#f1f1f1);border-right:1px solid #d4d4d4"></div>
<div class="abs" style="left:0;top:832px;width:1025px;height:1px;background:#c8c8c8"></div>
<div class="abs" style="left:1024px;top:820px;width:1px;height:13px;background:#bdbdbd"></div>
<div class="abs" style="left:0;top:820px;width:1px;height:13px;background:#bdbdbd"></div>
<div class="abs" style="left:1014px;top:821.5px;width:11px;height:10.5px;background:linear-gradient(#fafafa,#ededed);border-left:1px solid #d0d0d0"></div>
<svg class="abs" style="left:1017.5px;top:822.7px" width="5" height="7" viewBox="0 0 5 7"><path d="M0.3,0.1 L0.3,6.5 L3.9,3.3 Z" fill="#444"/></svg>
<div class="abs" style="left:1028px;top:369px;width:508px;height:442.5px;background:#fff;border:1px solid #bdbdbd;border-right-color:#d4d4d4;overflow:hidden">
<div class="abs" style="left:0;top:0;width:34px;height:442px;background:#efefef"></div>
<div class="dr mono" style="left:4.8px;top:0.20px;color:#ababab">0000</div>
<div class="dr mono" style="left:39.8px;top:0.20px"><span style="color:#1a1a1a">be </span><span style="color:#1a1a1a">ef </span><span style="color:#1a1a1a">de </span><span style="color:#1a1a1a">ad </span><span style="color:#1a1a1a">02 </span><span style="color:#1a1a1a">27 </span><span style="color:#1a1a1a">00 </span><span style="color:#1a1a1a">00  </span><span style="color:#1a1a1a">6d </span><span style="color:#1a1a1a">61 </span><span style="color:#1a1a1a">63 </span><span style="color:#1a1a1a">2d </span><span style="color:#1a1a1a">6c </span><span style="color:#1a1a1a">74 </span><span style="color:#1a1a1a">65 </span><span style="color:#1a1a1a">01</span></div>
<div class="dr mono" style="left:332.8px;top:0.20px"><span style="color:#a0a0a0">·</span><span style="color:#a0a0a0">·</span><span style="color:#a0a0a0">·</span><span style="color:#a0a0a0">·</span><span style="color:#a0a0a0">·</span><span style="color:#1a1a1a">&#x27;</span><span style="color:#a0a0a0">·</span><span style="color:#a0a0a0">·</span><span style="color:#1a1a1a"> m</span><span style="color:#1a1a1a">a</span><span style="color:#1a1a1a">c</span><span style="color:#1a1a1a">-</span><span style="color:#1a1a1a">l</span><span style="color:#1a1a1a">t</span><span style="color:#1a1a1a">e</span><span style="color:#a0a0a0">·</span></div>
<div class="dr mono" style="left:4.8px;top:11.40px;color:#ababab">0010</div>
<div class="dr mono" style="left:39.8px;top:11.40px"><span style="color:#1a1a1a">00 </span><span style="color:#1a1a1a">03 </span><span style="color:#1a1a1a">02 </span><span style="color:#1a1a1a">00 </span><span style="color:#1a1a1a">46 </span><span style="color:#1a1a1a">03 </span><span style="color:#1a1a1a">00 </span><span style="color:#1a1a1a">00  </span><span style="color:#1a1a1a">04 </span><span style="color:#1a1a1a">02 </span><span style="color:#1a1a1a">c8 </span><span style="color:#1a1a1a">07 </span><span style="color:#1a1a1a">01 </span><span style="color:#1a1a1a">0a </span><span style="color:#1a1a1a">00 </span><span style="color:#1a1a1a">0f</span></div>
<div class="dr mono" style="left:332.8px;top:11.40px"><span style="color:#a0a0a0">·</span><span style="color:#a0a0a0">·</span><span style="color:#a0a0a0">·</span><span style="color:#a0a0a0">·</span><span style="color:#1a1a1a">F</span><span style="color:#a0a0a0">·</span><span style="color:#a0a0a0">·</span><span style="color:#a0a0a0">·</span><span style="color:#a0a0a0"> ·</span><span style="color:#a0a0a0">·</span><span style="color:#a0a0a0">·</span><span style="color:#a0a0a0">·</span><span style="color:#a0a0a0">·</span><span style="color:#a0a0a0">·</span><span style="color:#a0a0a0">·</span><span style="color:#a0a0a0">·</span></div>
<div class="dr" style="left:74.33px;top:22.60px;width:241.71px;background:#2f8ac8"></div>
<div class="dr" style="left:344.31px;top:22.60px;width:86.33px;background:#2f8ac8"></div>
<div class="dr mono" style="left:4.8px;top:22.60px;color:#686868">0020</div>
<div class="dr mono" style="left:39.8px;top:22.60px"><span style="color:#1a1a1a">00 </span><span style="color:#1a1a1a">01 </span><span style="color:#d8ecfa">3a </span><span style="color:#d8ecfa">3e </span><span style="color:#d8ecfa">21 </span><span style="color:#d8ecfa">02 </span><span style="color:#d8ecfa">21 </span><span style="color:#d8ecfa">12  </span><span style="color:#d8ecfa">1f </span><span style="color:#d8ecfa">35 </span><span style="color:#d8ecfa">00 </span><span style="color:#d8ecfa">00 </span><span style="color:#d8ecfa">00 </span><span style="color:#d8ecfa">00 </span><span style="color:#d8ecfa">0c </span><span style="color:#d8ecfa">a0</span></div>
<div class="dr mono" style="left:332.8px;top:22.60px"><span style="color:#a0a0a0">·</span><span style="color:#a0a0a0">·</span><span style="color:#d8ecfa">:</span><span style="color:#d8ecfa">&gt;</span><span style="color:#d8ecfa">!</span><span style="color:#c8e0f4">·</span><span style="color:#d8ecfa">!</span><span style="color:#c8e0f4">·</span><span style="color:#c8e0f4"> ·</span><span style="color:#d8ecfa">5</span><span style="color:#c8e0f4">·</span><span style="color:#c8e0f4">·</span><span style="color:#c8e0f4">·</span><span style="color:#c8e0f4">·</span><span style="color:#c8e0f4">·</span><span style="color:#c8e0f4">·</span></div>
<div class="dr" style="left:39.80px;top:33.80px;width:276.24px;background:#2f8ac8"></div>
<div class="dr" style="left:332.80px;top:33.80px;width:97.83px;background:#2f8ac8"></div>
<div class="dr mono" style="left:4.8px;top:33.80px;color:#686868">0030</div>
<div class="dr mono" style="left:39.8px;top:33.80px"><span style="color:#d8ecfa">03 </span><span style="color:#d8ecfa">03 </span><span style="color:#d8ecfa">48 </span><span style="color:#d8ecfa">01 </span><span style="color:#d8ecfa">08 </span><span style="color:#d8ecfa">e3 </span><span style="color:#d8ecfa">dd </span><span style="color:#d8ecfa">02  </span><span style="color:#d8ecfa">e8 </span><span style="color:#d8ecfa">40 </span><span style="color:#d8ecfa">0d </span><span style="color:#d8ecfa">11 </span><span style="color:#d8ecfa">c0 </span><span style="color:#d8ecfa">00 </span><span style="color:#d8ecfa">00 </span><span style="color:#d8ecfa">00</span></div>
<div class="dr mono" style="left:332.8px;top:33.80px"><span style="color:#c8e0f4">·</span><span style="color:#c8e0f4">·</span><span style="color:#d8ecfa">H</span><span style="color:#c8e0f4">·</span><span style="color:#c8e0f4">·</span><span style="color:#c8e0f4">·</span><span style="color:#c8e0f4">·</span><span style="color:#c8e0f4">·</span><span style="color:#c8e0f4"> ·</span><span style="color:#d8ecfa">@</span><span style="color:#c8e0f4">·</span><span style="color:#c8e0f4">·</span><span style="color:#c8e0f4">·</span><span style="color:#c8e0f4">·</span><span style="color:#c8e0f4">·</span><span style="color:#c8e0f4">·</span></div>
<div class="dr" style="left:39.80px;top:45.00px;width:276.24px;background:#2f8ac8"></div>
<div class="dr" style="left:332.80px;top:45.00px;width:97.83px;background:#2f8ac8"></div>
<div class="dr mono" style="left:4.8px;top:45.00px;color:#686868">0040</div>
<div class="dr mono" style="left:39.8px;top:45.00px"><span style="color:#d8ecfa">00 </span><span style="color:#d8ecfa">00 </span><span style="color:#d8ecfa">00 </span><span style="color:#d8ecfa">00 </span><span style="color:#d8ecfa">00 </span><span style="color:#d8ecfa">00 </span><span style="color:#d8ecfa">00 </span><span style="color:#d8ecfa">00  </span><span style="color:#d8ecfa">00 </span><span style="color:#d8ecfa">00 </span><span style="color:#d8ecfa">00 </span><span style="color:#d8ecfa">00 </span><span style="color:#d8ecfa">00 </span><span style="color:#d8ecfa">00 </span><span style="color:#d8ecfa">00 </span><span style="color:#d8ecfa">00</span></div>
<div class="dr mono" style="left:332.8px;top:45.00px"><span style="color:#c8e0f4">·</span><span style="color:#c8e0f4">·</span><span style="color:#c8e0f4">·</span><span style="color:#c8e0f4">·</span><span style="color:#c8e0f4">·</span><span style="color:#c8e0f4">·</span><span style="color:#c8e0f4">·</span><span style="color:#c8e0f4">·</span><span style="color:#c8e0f4"> ·</span><span style="color:#c8e0f4">·</span><span style="color:#c8e0f4">·</span><span style="color:#c8e0f4">·</span><span style="color:#c8e0f4">·</span><span style="color:#c8e0f4">·</span><span style="color:#c8e0f4">·</span><span style="color:#c8e0f4">·</span></div>
<div class="dr" style="left:39.80px;top:56.20px;width:276.24px;background:#2f8ac8"></div>
<div class="dr" style="left:332.80px;top:56.20px;width:97.83px;background:#2f8ac8"></div>
<div class="dr mono" style="left:4.8px;top:56.20px;color:#686868">0050</div>
<div class="dr mono" style="left:39.8px;top:56.20px"><span style="color:#d8ecfa">00 </span><span style="color:#d8ecfa">00 </span><span style="color:#d8ecfa">00 </span><span style="color:#d8ecfa">00 </span><span style="color:#d8ecfa">00 </span><span style="color:#d8ecfa">00 </span><span style="color:#d8ecfa">00 </span><span style="color:#d8ecfa">00  </span><span style="color:#d8ecfa">00 </span><span style="color:#d8ecfa">00 </span><span style="color:#d8ecfa">00 </span><span style="color:#d8ecfa">00 </span><span style="color:#d8ecfa">00 </span><span style="color:#d8ecfa">00 </span><span style="color:#d8ecfa">00 </span><span style="color:#d8ecfa">00</span></div>
<div class="dr mono" style="left:332.8px;top:56.20px"><span style="color:#c8e0f4">·</span><span style="color:#c8e0f4">·</span><span style="color:#c8e0f4">·</span><span style="color:#c8e0f4">·</span><span style="color:#c8e0f4">·</span><span style="color:#c8e0f4">·</span><span style="color:#c8e0f4">·</span><span style="color:#c8e0f4">·</span><span style="color:#c8e0f4"> ·</span><span style="color:#c8e0f4">·</span><span style="color:#c8e0f4">·</span><span style="color:#c8e0f4">·</span><span style="color:#c8e0f4">·</span><span style="color:#c8e0f4">·</span><span style="color:#c8e0f4">·</span><span style="color:#c8e0f4">·</span></div>
<div class="dr" style="left:39.80px;top:67.40px;width:276.24px;background:#2f8ac8"></div>
<div class="dr" style="left:332.80px;top:67.40px;width:97.83px;background:#2f8ac8"></div>
<div class="dr mono" style="left:4.8px;top:67.40px;color:#686868">0060</div>
<div class="dr mono" style="left:39.8px;top:67.40px"><span style="color:#d8ecfa">00 </span><span style="color:#d8ecfa">00 </span><span style="color:#d8ecfa">00 </span><span style="color:#d8ecfa">00 </span><span style="color:#d8ecfa">00 </span><span style="color:#d8ecfa">00 </span><span style="color:#d8ecfa">00 </span><span style="color:#d8ecfa">00  </span><span style="color:#d8ecfa">00 </span><span style="color:#d8ecfa">00 </span><span style="color:#d8ecfa">00 </span><span style="color:#d8ecfa">00 </span><span style="color:#d8ecfa">00 </span><span style="color:#d8ecfa">00 </span><span style="color:#d8ecfa">00 </span><span style="color:#d8ecfa">00</span></div>
<div class="dr mono" style="left:332.8px;top:67.40px"><span style="color:#c8e0f4">·</span><span style="color:#c8e0f4">·</span><span style="color:#c8e0f4">·</span><span style="color:#c8e0f4">·</span><span style="color:#c8e0f4">·</span><span style="color:#c8e0f4">·</span><span style="color:#c8e0f4">·</span><span style="color:#c8e0f4">·</span><span style="color:#c8e0f4"> ·</span><span style="color:#c8e0f4">·</span><span style="color:#c8e0f4">·</span><span style="color:#c8e0f4">·</span><span style="color:#c8e0f4">·</span><span style="color:#c8e0f4">·</span><span style="color:#c8e0f4">·</span><span style="color:#c8e0f4">·</span></div>
<div class="dr" style="left:39.80px;top:78.60px;width:276.24px;background:#2f8ac8"></div>
<div class="dr" style="left:332.80px;top:78.60px;width:97.83px;background:#2f8ac8"></div>
<div class="dr mono" style="left:4.8px;top:78.60px;color:#686868">0070</div>
<div class="dr mono" style="left:39.8px;top:78.60px"><span style="color:#d8ecfa">00 </span><span style="color:#d8ecfa">00 </span><span style="color:#d8ecfa">00 </span><span style="color:#d8ecfa">00 </span><span style="color:#d8ecfa">00 </span><span style="color:#d8ecfa">00 </span><span style="color:#d8ecfa">00 </span><span style="color:#d8ecfa">00  </span><span style="color:#d8ecfa">00 </span><span style="color:#d8ecfa">00 </span><span style="color:#d8ecfa">00 </span><span style="color:#d8ecfa">00 </span><span style="color:#d8ecfa">00 </span><span style="color:#d8ecfa">00 </span><span style="color:#d8ecfa">00 </span><span style="color:#d8ecfa">00</span></div>
<div class="dr mono" style="left:332.8px;top:78.60px"><span style="color:#c8e0f4">·</span><span style="color:#c8e0f4">·</span><span style="color:#c8e0f4">·</span><span style="color:#c8e0f4">·</span><span style="color:#c8e0f4">·</span><span style="color:#c8e0f4">·</span><span style="color:#c8e0f4">·</span><span style="color:#c8e0f4">·</span><span style="color:#c8e0f4"> ·</span><span style="color:#c8e0f4">·</span><span style="color:#c8e0f4">·</span><span style="color:#c8e0f4">·</span><span style="color:#c8e0f4">·</span><span style="color:#c8e0f4">·</span><span style="color:#c8e0f4">·</span><span style="color:#c8e0f4">·</span></div>
<div class="dr" style="left:39.80px;top:89.80px;width:276.24px;background:#2f8ac8"></div>
<div class="dr" style="left:332.80px;top:89.80px;width:97.83px;background:#2f8ac8"></div>
<div class="dr mono" style="left:4.8px;top:89.80px;color:#686868">0080</div>
<div class="dr mono" style="left:39.8px;top:89.80px"><span style="color:#d8ecfa">00 </span><span style="color:#d8ecfa">00 </span><span style="color:#d8ecfa">00 </span><span style="color:#d8ecfa">00 </span><span style="color:#d8ecfa">00 </span><span style="color:#d8ecfa">00 </span><span style="color:#d8ecfa">00 </span><span style="color:#d8ecfa">00  </span><span style="color:#d8ecfa">00 </span><span style="color:#d8ecfa">00 </span><span style="color:#d8ecfa">00 </span><span style="color:#d8ecfa">00 </span><span style="color:#d8ecfa">00 </span><span style="color:#d8ecfa">00 </span><span style="color:#d8ecfa">00 </span><span style="color:#d8ecfa">00</span></div>
<div class="dr mono" style="left:332.8px;top:89.80px"><span style="color:#c8e0f4">·</span><span style="color:#c8e0f4">·</span><span style="color:#c8e0f4">·</span><span style="color:#c8e0f4">·</span><span style="color:#c8e0f4">·</span><span style="color:#c8e0f4">·</span><span style="color:#c8e0f4">·</span><span style="color:#c8e0f4">·</span><span style="color:#c8e0f4"> ·</span><span style="color:#c8e0f4">·</span><span style="color:#c8e0f4">·</span><span style="color:#c8e0f4">·</span><span style="color:#c8e0f4">·</span><span style="color:#c8e0f4">·</span><span style="color:#c8e0f4">·</span><span style="color:#c8e0f4">·</span></div>
<div class="dr" style="left:39.80px;top:101.00px;width:276.24px;background:#2f8ac8"></div>
<div class="dr" style="left:332.80px;top:101.00px;width:97.83px;background:#2f8ac8"></div>
<div class="dr mono" style="left:4.8px;top:101.00px;color:#686868">0090</div>
<div class="dr mono" style="left:39.8px;top:101.00px"><span style="color:#d8ecfa">00 </span><span style="color:#d8ecfa">00 </span><span style="color:#d8ecfa">00 </span><span style="color:#d8ecfa">00 </span><span style="color:#d8ecfa">00 </span><span style="color:#d8ecfa">00 </span><span style="color:#d8ecfa">00 </span><span style="color:#d8ecfa">00  </span><span style="color:#d8ecfa">00 </span><span style="color:#d8ecfa">00 </span><span style="color:#d8ecfa">00 </span><span style="color:#d8ecfa">00 </span><span style="color:#d8ecfa">00 </span><span style="color:#d8ecfa">00 </span><span style="color:#d8ecfa">00 </span><span style="color:#d8ecfa">00</span></div>
<div class="dr mono" style="left:332.8px;top:101.00px"><span style="color:#c8e0f4">·</span><span style="color:#c8e0f4">·</span><span style="color:#c8e0f4">·</span><span style="color:#c8e0f4">·</span><span style="color:#c8e0f4">·</span><span style="color:#c8e0f4">·</span><span style="color:#c8e0f4">·</span><span style="color:#c8e0f4">·</span><span style="color:#c8e0f4"> ·</span><span style="color:#c8e0f4">·</span><span style="color:#c8e0f4">·</span><span style="color:#c8e0f4">·</span><span style="color:#c8e0f4">·</span><span style="color:#c8e0f4">·</span><span style="color:#c8e0f4">·</span><span style="color:#c8e0f4">·</span></div>
<div class="dr" style="left:39.80px;top:112.20px;width:276.24px;background:#2f8ac8"></div>
<div class="dr" style="left:332.80px;top:112.20px;width:97.83px;background:#2f8ac8"></div>
<div class="dr mono" style="left:4.8px;top:112.20px;color:#686868">00a0</div>
<div class="dr mono" style="left:39.8px;top:112.20px"><span style="color:#d8ecfa">00 </span><span style="color:#d8ecfa">00 </span><span style="color:#d8ecfa">00 </span><span style="color:#d8ecfa">00 </span><span style="color:#d8ecfa">00 </span><span style="color:#d8ecfa">00 </span><span style="color:#d8ecfa">00 </span><span style="color:#d8ecfa">00  </span><span style="color:#d8ecfa">00 </span><span style="color:#d8ecfa">00 </span><span style="color:#d8ecfa">00 </span><span style="color:#d8ecfa">00 </span><span style="color:#d8ecfa">00 </span><span style="color:#d8ecfa">00 </span><span style="color:#d8ecfa">00 </span><span style="color:#d8ecfa">00</span></div>
<div class="dr mono" style="left:332.8px;top:112.20px"><span style="color:#c8e0f4">·</span><span style="color:#c8e0f4">·</span><span style="color:#c8e0f4">·</span><span style="color:#c8e0f4">·</span><span style="color:#c8e0f4">·</span><span style="color:#c8e0f4">·</span><span style="color:#c8e0f4">·</span><span style="color:#c8e0f4">·</span><span style="color:#c8e0f4"> ·</span><span style="color:#c8e0f4">·</span><span style="color:#c8e0f4">·</span><span style="color:#c8e0f4">·</span><span style="color:#c8e0f4">·</span><span style="color:#c8e0f4">·</span><span style="color:#c8e0f4">·</span><span style="color:#c8e0f4">·</span></div>
<div class="dr" style="left:39.80px;top:123.40px;width:276.24px;background:#2f8ac8"></div>
<div class="dr" style="left:332.80px;top:123.40px;width:97.83px;background:#2f8ac8"></div>
<div class="dr mono" style="left:4.8px;top:123.40px;color:#686868">00b0</div>
<div class="dr mono" style="left:39.8px;top:123.40px"><span style="color:#d8ecfa">00 </span><span style="color:#d8ecfa">00 </span><span style="color:#d8ecfa">00 </span><span style="color:#d8ecfa">00 </span><span style="color:#d8ecfa">00 </span><span style="color:#d8ecfa">00 </span><span style="color:#d8ecfa">00 </span><span style="color:#d8ecfa">00  </span><span style="color:#d8ecfa">00 </span><span style="color:#d8ecfa">00 </span><span style="color:#d8ecfa">00 </span><span style="color:#d8ecfa">00 </span><span style="color:#d8ecfa">00 </span><span style="color:#d8ecfa">00 </span><span style="color:#d8ecfa">00 </span><span style="color:#d8ecfa">00</span></div>
<div class="dr mono" style="left:332.8px;top:123.40px"><span style="color:#c8e0f4">·</span><span style="color:#c8e0f4">·</span><span style="color:#c8e0f4">·</span><span style="color:#c8e0f4">·</span><span style="color:#c8e0f4">·</span><span style="color:#c8e0f4">·</span><span style="color:#c8e0f4">·</span><span style="color:#c8e0f4">·</span><span style="color:#c8e0f4"> ·</span><span style="color:#c8e0f4">·</span><span style="color:#c8e0f4">·</span><span style="color:#c8e0f4">·</span><span style="color:#c8e0f4">·</span><span style="color:#c8e0f4">·</span><span style="color:#c8e0f4">·</span><span style="color:#c8e0f4">·</span></div>
<div class="dr" style="left:39.80px;top:134.60px;width:276.24px;background:#2f8ac8"></div>
<div class="dr" style="left:332.80px;top:134.60px;width:97.83px;background:#2f8ac8"></div>
<div class="dr mono" style="left:4.8px;top:134.60px;color:#686868">00c0</div>
<div class="dr mono" style="left:39.8px;top:134.60px"><span style="color:#d8ecfa">00 </span><span style="color:#d8ecfa">00 </span><span style="color:#d8ecfa">00 </span><span style="color:#d8ecfa">00 </span><span style="color:#d8ecfa">00 </span><span style="color:#d8ecfa">00 </span><span style="color:#d8ecfa">00 </span><span style="color:#d8ecfa">00  </span><span style="color:#d8ecfa">00 </span><span style="color:#d8ecfa">00 </span><span style="color:#d8ecfa">00 </span><span style="color:#d8ecfa">00 </span><span style="color:#d8ecfa">00 </span><span style="color:#d8ecfa">00 </span><span style="color:#d8ecfa">00 </span><span style="color:#d8ecfa">00</span></div>
<div class="dr mono" style="left:332.8px;top:134.60px"><span style="color:#c8e0f4">·</span><span style="color:#c8e0f4">·</span><span style="color:#c8e0f4">·</span><span style="color:#c8e0f4">·</span><span style="color:#c8e0f4">·</span><span style="color:#c8e0f4">·</span><span style="color:#c8e0f4">·</span><span style="color:#c8e0f4">·</span><span style="color:#c8e0f4"> ·</span><span style="color:#c8e0f4">·</span><span style="color:#c8e0f4">·</span><span style="color:#c8e0f4">·</span><span style="color:#c8e0f4">·</span><span style="color:#c8e0f4">·</span><span style="color:#c8e0f4">·</span><span style="color:#c8e0f4">·</span></div>
<div class="dr" style="left:39.80px;top:145.80px;width:276.24px;background:#2f8ac8"></div>
<div class="dr" style="left:332.80px;top:145.80px;width:97.83px;background:#2f8ac8"></div>
<div class="dr mono" style="left:4.8px;top:145.80px;color:#686868">00d0</div>
<div class="dr mono" style="left:39.8px;top:145.80px"><span style="color:#d8ecfa">00 </span><span style="color:#d8ecfa">00 </span><span style="color:#d8ecfa">00 </span><span style="color:#d8ecfa">00 </span><span style="color:#d8ecfa">00 </span><span style="color:#d8ecfa">00 </span><span style="color:#d8ecfa">00 </span><span style="color:#d8ecfa">00  </span><span style="color:#d8ecfa">00 </span><span style="color:#d8ecfa">00 </span><span style="color:#d8ecfa">00 </span><span style="color:#d8ecfa">00 </span><span style="color:#d8ecfa">00 </span><span style="color:#d8ecfa">00 </span><span style="color:#d8ecfa">00 </span><span style="color:#d8ecfa">00</span></div>
<div class="dr mono" style="left:332.8px;top:145.80px"><span style="color:#c8e0f4">·</span><span style="color:#c8e0f4">·</span><span style="color:#c8e0f4">·</span><span style="color:#c8e0f4">·</span><span style="color:#c8e0f4">·</span><span style="color:#c8e0f4">·</span><span style="color:#c8e0f4">·</span><span style="color:#c8e0f4">·</span><span style="color:#c8e0f4"> ·</span><span style="color:#c8e0f4">·</span><span style="color:#c8e0f4">·</span><span style="color:#c8e0f4">·</span><span style="color:#c8e0f4">·</span><span style="color:#c8e0f4">·</span><span style="color:#c8e0f4">·</span><span style="color:#c8e0f4">·</span></div>
<div class="dr" style="left:39.80px;top:157.00px;width:276.24px;background:#2f8ac8"></div>
<div class="dr" style="left:332.80px;top:157.00px;width:97.83px;background:#2f8ac8"></div>
<div class="dr mono" style="left:4.8px;top:157.00px;color:#686868">00e0</div>
<div class="dr mono" style="left:39.8px;top:157.00px"><span style="color:#d8ecfa">00 </span><span style="color:#d8ecfa">00 </span><span style="color:#d8ecfa">00 </span><span style="color:#d8ecfa">00 </span><span style="color:#d8ecfa">00 </span><span style="color:#d8ecfa">00 </span><span style="color:#d8ecfa">00 </span><span style="color:#d8ecfa">00  </span><span style="color:#d8ecfa">00 </span><span style="color:#d8ecfa">00 </span><span style="color:#d8ecfa">00 </span><span style="color:#d8ecfa">00 </span><span style="color:#d8ecfa">00 </span><span style="color:#d8ecfa">00 </span><span style="color:#d8ecfa">00 </span><span style="color:#d8ecfa">00</span></div>
<div class="dr mono" style="left:332.8px;top:157.00px"><span style="color:#c8e0f4">·</span><span style="color:#c8e0f4">·</span><span style="color:#c8e0f4">·</span><span style="color:#c8e0f4">·</span><span style="color:#c8e0f4">·</span><span style="color:#c8e0f4">·</span><span style="color:#c8e0f4">·</span><span style="color:#c8e0f4">·</span><span style="color:#c8e0f4"> ·</span><span style="color:#c8e0f4">·</span><span style="color:#c8e0f4">·</span><span style="color:#c8e0f4">·</span><span style="color:#c8e0f4">·</span><span style="color:#c8e0f4">·</span><span style="color:#c8e0f4">·</span><span style="color:#c8e0f4">·</span></div>
<div class="dr" style="left:39.80px;top:168.20px;width:276.24px;background:#2f8ac8"></div>
<div class="dr" style="left:332.80px;top:168.20px;width:97.83px;background:#2f8ac8"></div>
<div class="dr mono" style="left:4.8px;top:168.20px;color:#686868">00f0</div>
<div class="dr mono" style="left:39.8px;top:168.20px"><span style="color:#d8ecfa">00 </span><span style="color:#d8ecfa">00 </span><span style="color:#d8ecfa">00 </span><span style="color:#d8ecfa">00 </span><span style="color:#d8ecfa">00 </span><span style="color:#d8ecfa">00 </span><span style="color:#d8ecfa">00 </span><span style="color:#d8ecfa">00  </span><span style="color:#d8ecfa">00 </span><span style="color:#d8ecfa">00 </span><span style="color:#d8ecfa">00 </span><span style="color:#d8ecfa">00 </span><span style="color:#d8ecfa">00 </span><span style="color:#d8ecfa">00 </span><span style="color:#d8ecfa">00 </span><span style="color:#d8ecfa">00</span></div>
<div class="dr mono" style="left:332.8px;top:168.20px"><span style="color:#c8e0f4">·</span><span style="color:#c8e0f4">·</span><span style="color:#c8e0f4">·</span><span style="color:#c8e0f4">·</span><span style="color:#c8e0f4">·</span><span style="color:#c8e0f4">·</span><span style="color:#c8e0f4">·</span><span style="color:#c8e0f4">·</span><span style="color:#c8e0f4"> ·</span><span style="color:#c8e0f4">·</span><span style="color:#c8e0f4">·</span><span style="color:#c8e0f4">·</span><span style="color:#c8e0f4">·</span><span style="color:#c8e0f4">·</span><span style="color:#c8e0f4">·</span><span style="color:#c8e0f4">·</span></div>
<div class="dr" style="left:39.80px;top:179.40px;width:276.24px;background:#2f8ac8"></div>
<div class="dr" style="left:332.80px;top:179.40px;width:97.83px;background:#2f8ac8"></div>
<div class="dr mono" style="left:4.8px;top:179.40px;color:#686868">0100</div>
<div class="dr mono" style="left:39.8px;top:179.40px"><span style="color:#d8ecfa">00 </span><span style="color:#d8ecfa">00 </span><span style="color:#d8ecfa">00 </span><span style="color:#d8ecfa">00 </span><span style="color:#d8ecfa">00 </span><span style="color:#d8ecfa">00 </span><span style="color:#d8ecfa">00 </span><span style="color:#d8ecfa">00  </span><span style="color:#d8ecfa">00 </span><span style="color:#d8ecfa">00 </span><span style="color:#d8ecfa">00 </span><span style="color:#d8ecfa">00 </span><span style="color:#d8ecfa">00 </span><span style="color:#d8ecfa">00 </span><span style="color:#d8ecfa">00 </span><span style="color:#d8ecfa">00</span></div>
<div class="dr mono" style="left:332.8px;top:179.40px"><span style="color:#c8e0f4">·</span><span style="color:#c8e0f4">·</span><span style="color:#c8e0f4">·</span><span style="color:#c8e0f4">·</span><span style="color:#c8e0f4">·</span><span style="color:#c8e0f4">·</span><span style="color:#c8e0f4">·</span><span style="color:#c8e0f4">·</span><span style="color:#c8e0f4"> ·</span><span style="color:#c8e0f4">·</span><span style="color:#c8e0f4">·</span><span style="color:#c8e0f4">·</span><span style="color:#c8e0f4">·</span><span style="color:#c8e0f4">·</span><span style="color:#c8e0f4">·</span><span style="color:#c8e0f4">·</span></div>
<div class="dr" style="left:39.80px;top:190.60px;width:276.24px;background:#2f8ac8"></div>
<div class="dr" style="left:332.80px;top:190.60px;width:97.83px;background:#2f8ac8"></div>
<div class="dr mono" style="left:4.8px;top:190.60px;color:#686868">0110</div>
<div class="dr mono" style="left:39.8px;top:190.60px"><span style="color:#d8ecfa">00 </span><span style="color:#d8ecfa">00 </span><span style="color:#d8ecfa">00 </span><span style="color:#d8ecfa">00 </span><span style="color:#d8ecfa">00 </span><span style="color:#d8ecfa">00 </span><span style="color:#d8ecfa">00 </span><span style="color:#d8ecfa">00  </span><span style="color:#d8ecfa">00 </span><span style="color:#d8ecfa">00 </span><span style="color:#d8ecfa">00 </span><span style="color:#d8ecfa">00 </span><span style="color:#d8ecfa">00 </span><span style="color:#d8ecfa">00 </span><span style="color:#d8ecfa">00 </span><span style="color:#d8ecfa">00</span></div>
<div class="dr mono" style="left:332.8px;top:190.60px"><span style="color:#c8e0f4">·</span><span style="color:#c8e0f4">·</span><span style="color:#c8e0f4">·</span><span style="color:#c8e0f4">·</span><span style="color:#c8e0f4">·</span><span style="color:#c8e0f4">·</span><span style="color:#c8e0f4">·</span><span style="color:#c8e0f4">·</span><span style="color:#c8e0f4"> ·</span><span style="color:#c8e0f4">·</span><span style="color:#c8e0f4">·</span><span style="color:#c8e0f4">·</span><span style="color:#c8e0f4">·</span><span style="color:#c8e0f4">·</span><span style="color:#c8e0f4">·</span><span style="color:#c8e0f4">·</span></div>
<div class="dr" style="left:39.80px;top:201.80px;width:276.24px;background:#2f8ac8"></div>
<div class="dr" style="left:332.80px;top:201.80px;width:97.83px;background:#2f8ac8"></div>
<div class="dr mono" style="left:4.8px;top:201.80px;color:#686868">0120</div>
<div class="dr mono" style="left:39.8px;top:201.80px"><span style="color:#d8ecfa">00 </span><span style="color:#d8ecfa">00 </span><span style="color:#d8ecfa">00 </span><span style="color:#d8ecfa">00 </span><span style="color:#d8ecfa">00 </span><span style="color:#d8ecfa">00 </span><span style="color:#d8ecfa">00 </span><span style="color:#d8ecfa">00  </span><span style="color:#d8ecfa">00 </span><span style="color:#d8ecfa">00 </span><span style="color:#d8ecfa">00 </span><span style="color:#d8ecfa">00 </span><span style="color:#d8ecfa">00 </span><span style="color:#d8ecfa">00 </span><span style="color:#d8ecfa">00 </span><span style="color:#d8ecfa">00</span></div>
<div class="dr mono" style="left:332.8px;top:201.80px"><span style="color:#c8e0f4">·</span><span style="color:#c8e0f4">·</span><span style="color:#c8e0f4">·</span><span style="color:#c8e0f4">·</span><span style="color:#c8e0f4">·</span><span style="color:#c8e0f4">·</span><span style="color:#c8e0f4">·</span><span style="color:#c8e0f4">·</span><span style="color:#c8e0f4"> ·</span><span style="color:#c8e0f4">·</span><span style="color:#c8e0f4">·</span><span style="color:#c8e0f4">·</span><span style="color:#c8e0f4">·</span><span style="color:#c8e0f4">·</span><span style="color:#c8e0f4">·</span><span style="color:#c8e0f4">·</span></div>
<div class="dr" style="left:39.80px;top:213.00px;width:276.24px;background:#2f8ac8"></div>
<div class="dr" style="left:332.80px;top:213.00px;width:97.83px;background:#2f8ac8"></div>
<div class="dr mono" style="left:4.8px;top:213.00px;color:#686868">0130</div>
<div class="dr mono" style="left:39.8px;top:213.00px"><span style="color:#d8ecfa">00 </span><span style="color:#d8ecfa">00 </span><span style="color:#d8ecfa">00 </span><span style="color:#d8ecfa">00 </span><span style="color:#d8ecfa">00 </span><span style="color:#d8ecfa">00 </span><span style="color:#d8ecfa">00 </span><span style="color:#d8ecfa">00  </span><span style="color:#d8ecfa">00 </span><span style="color:#d8ecfa">00 </span><span style="color:#d8ecfa">00 </span><span style="color:#d8ecfa">00 </span><span style="color:#d8ecfa">00 </span><span style="color:#d8ecfa">00 </span><span style="color:#d8ecfa">00 </span><span style="color:#d8ecfa">00</span></div>
<div class="dr mono" style="left:332.8px;top:213.00px"><span style="color:#c8e0f4">·</span><span style="color:#c8e0f4">·</span><span style="color:#c8e0f4">·</span><span style="color:#c8e0f4">·</span><span style="color:#c8e0f4">·</span><span style="color:#c8e0f4">·</span><span style="color:#c8e0f4">·</span><span style="color:#c8e0f4">·</span><span style="color:#c8e0f4"> ·</span><span style="color:#c8e0f4">·</span><span style="color:#c8e0f4">·</span><span style="color:#c8e0f4">·</span><span style="color:#c8e0f4">·</span><span style="color:#c8e0f4">·</span><span style="color:#c8e0f4">·</span><span style="color:#c8e0f4">·</span></div>
<div class="dr" style="left:39.80px;top:224.20px;width:276.24px;background:#2f8ac8"></div>
<div class="dr" style="left:332.80px;top:224.20px;width:97.83px;background:#2f8ac8"></div>
<div class="dr mono" style="left:4.8px;top:224.20px;color:#686868">0140</div>
<div class="dr mono" style="left:39.8px;top:224.20px"><span style="color:#d8ecfa">00 </span><span style="color:#d8ecfa">00 </span><span style="color:#d8ecfa">00 </span><span style="color:#d8ecfa">00 </span><span style="color:#d8ecfa">00 </span><span style="color:#d8ecfa">00 </span><span style="color:#d8ecfa">00 </span><span style="color:#d8ecfa">00  </span><span style="color:#d8ecfa">00 </span><span style="color:#d8ecfa">00 </span><span style="color:#d8ecfa">00 </span><span style="color:#d8ecfa">00 </span><span style="color:#d8ecfa">00 </span><span style="color:#d8ecfa">00 </span><span style="color:#d8ecfa">00 </span><span style="color:#d8ecfa">00</span></div>
<div class="dr mono" style="left:332.8px;top:224.20px"><span style="color:#c8e0f4">·</span><span style="color:#c8e0f4">·</span><span style="color:#c8e0f4">·</span><span style="color:#c8e0f4">·</span><span style="color:#c8e0f4">·</span><span style="color:#c8e0f4">·</span><span style="color:#c8e0f4">·</span><span style="color:#c8e0f4">·</span><span style="color:#c8e0f4"> ·</span><span style="color:#c8e0f4">·</span><span style="color:#c8e0f4">·</span><span style="color:#c8e0f4">·</span><span style="color:#c8e0f4">·</span><span style="color:#c8e0f4">·</span><span style="color:#c8e0f4">·</span><span style="color:#c8e0f4">·</span></div>
<div class="dr" style="left:39.80px;top:235.40px;width:276.24px;background:#2f8ac8"></div>
<div class="dr" style="left:332.80px;top:235.40px;width:97.83px;background:#2f8ac8"></div>
<div class="dr mono" style="left:4.8px;top:235.40px;color:#686868">0150</div>
<div class="dr mono" style="left:39.8px;top:235.40px"><span style="color:#d8ecfa">00 </span><span style="color:#d8ecfa">00 </span><span style="color:#d8ecfa">00 </span><span style="color:#d8ecfa">00 </span><span style="color:#d8ecfa">00 </span><span style="color:#d8ecfa">00 </span><span style="color:#d8ecfa">00 </span><span style="color:#d8ecfa">00  </span><span style="color:#d8ecfa">00 </span><span style="color:#d8ecfa">00 </span><span style="color:#d8ecfa">00 </span><span style="color:#d8ecfa">00 </span><span style="color:#d8ecfa">00 </span><span style="color:#d8ecfa">00 </span><span style="color:#d8ecfa">00 </span><span style="color:#d8ecfa">00</span></div>
<div class="dr mono" style="left:332.8px;top:235.40px"><span style="color:#c8e0f4">·</span><span style="color:#c8e0f4">·</span><span style="color:#c8e0f4">·</span><span style="color:#c8e0f4">·</span><span style="color:#c8e0f4">·</span><span style="color:#c8e0f4">·</span><span style="color:#c8e0f4">·</span><span style="color:#c8e0f4">·</span><span style="color:#c8e0f4"> ·</span><span style="color:#c8e0f4">·</span><span style="color:#c8e0f4">·</span><span style="color:#c8e0f4">·</span><span style="color:#c8e0f4">·</span><span style="color:#c8e0f4">·</span><span style="color:#c8e0f4">·</span><span style="color:#c8e0f4">·</span></div>
<div class="dr" style="left:39.80px;top:246.60px;width:276.24px;background:#2f8ac8"></div>
<div class="dr" style="left:332.80px;top:246.60px;width:97.83px;background:#2f8ac8"></div>
<div class="dr mono" style="left:4.8px;top:246.60px;color:#686868">0160</div>
<div class="dr mono" style="left:39.8px;top:246.60px"><span style="color:#d8ecfa">00 </span><span style="color:#d8ecfa">00 </span><span style="color:#d8ecfa">00 </span><span style="color:#d8ecfa">00 </span><span style="color:#d8ecfa">00 </span><span style="color:#d8ecfa">00 </span><span style="color:#d8ecfa">00 </span><span style="color:#d8ecfa">00  </span><span style="color:#d8ecfa">00 </span><span style="color:#d8ecfa">00 </span><span style="color:#d8ecfa">00 </span><span style="color:#d8ecfa">00 </span><span style="color:#d8ecfa">00 </span><span style="color:#d8ecfa">00 </span><span style="color:#d8ecfa">00 </span><span style="color:#d8ecfa">00</span></div>
<div class="dr mono" style="left:332.8px;top:246.60px"><span style="color:#c8e0f4">·</span><span style="color:#c8e0f4">·</span><span style="color:#c8e0f4">·</span><span style="color:#c8e0f4">·</span><span style="color:#c8e0f4">·</span><span style="color:#c8e0f4">·</span><span style="color:#c8e0f4">·</span><span style="color:#c8e0f4">·</span><span style="color:#c8e0f4"> ·</span><span style="color:#c8e0f4">·</span><span style="color:#c8e0f4">·</span><span style="color:#c8e0f4">·</span><span style="color:#c8e0f4">·</span><span style="color:#c8e0f4">·</span><span style="color:#c8e0f4">·</span><span style="color:#c8e0f4">·</span></div>
<div class="dr" style="left:39.80px;top:257.80px;width:276.24px;background:#2f8ac8"></div>
<div class="dr" style="left:332.80px;top:257.80px;width:97.83px;background:#2f8ac8"></div>
<div class="dr mono" style="left:4.8px;top:257.80px;color:#686868">0170</div>
<div class="dr mono" style="left:39.8px;top:257.80px"><span style="color:#d8ecfa">00 </span><span style="color:#d8ecfa">00 </span><span style="color:#d8ecfa">00 </span><span style="color:#d8ecfa">00 </span><span style="color:#d8ecfa">00 </span><span style="color:#d8ecfa">00 </span><span style="color:#d8ecfa">00 </span><span style="color:#d8ecfa">00  </span><span style="color:#d8ecfa">00 </span><span style="color:#d8ecfa">00 </span><span style="color:#d8ecfa">00 </span><span style="color:#d8ecfa">00 </span><span style="color:#d8ecfa">00 </span><span style="color:#d8ecfa">00 </span><span style="color:#d8ecfa">00 </span><span style="color:#d8ecfa">00</span></div>
<div class="dr mono" style="left:332.8px;top:257.80px"><span style="color:#c8e0f4">·</span><span style="color:#c8e0f4">·</span><span style="color:#c8e0f4">·</span><span style="color:#c8e0f4">·</span><span style="color:#c8e0f4">·</span><span style="color:#c8e0f4">·</span><span style="color:#c8e0f4">·</span><span style="color:#c8e0f4">·</span><span style="color:#c8e0f4"> ·</span><span style="color:#c8e0f4">·</span><span style="color:#c8e0f4">·</span><span style="color:#c8e0f4">·</span><span style="color:#c8e0f4">·</span><span style="color:#c8e0f4">·</span><span style="color:#c8e0f4">·</span><span style="color:#c8e0f4">·</span></div>
<div class="dr" style="left:39.80px;top:269.00px;width:276.24px;background:#2f8ac8"></div>
<div class="dr" style="left:332.80px;top:269.00px;width:97.83px;background:#2f8ac8"></div>
<div class="dr mono" style="left:4.8px;top:269.00px;color:#686868">0180</div>
<div class="dr mono" style="left:39.8px;top:269.00px"><span style="color:#d8ecfa">00 </span><span style="color:#d8ecfa">00 </span><span style="color:#d8ecfa">00 </span><span style="color:#d8ecfa">00 </span><span style="color:#d8ecfa">00 </span><span style="color:#d8ecfa">00 </span><span style="color:#d8ecfa">00 </span><span style="color:#d8ecfa">00  </span><span style="color:#d8ecfa">00 </span><span style="color:#d8ecfa">00 </span><span style="color:#d8ecfa">00 </span><span style="color:#d8ecfa">00 </span><span style="color:#d8ecfa">00 </span><span style="color:#d8ecfa">00 </span><span style="color:#d8ecfa">00 </span><span style="color:#d8ecfa">00</span></div>
<div class="dr mono" style="left:332.8px;top:269.00px"><span style="color:#c8e0f4">·</span><span style="color:#c8e0f4">·</span><span style="color:#c8e0f4">·</span><span style="color:#c8e0f4">·</span><span style="color:#c8e0f4">·</span><span style="color:#c8e0f4">·</span><span style="color:#c8e0f4">·</span><span style="color:#c8e0f4">·</span><span style="color:#c8e0f4"> ·</span><span style="color:#c8e0f4">·</span><span style="color:#c8e0f4">·</span><span style="color:#c8e0f4">·</span><span style="color:#c8e0f4">·</span><span style="color:#c8e0f4">·</span><span style="color:#c8e0f4">·</span><span style="color:#c8e0f4">·</span></div>
<div class="dr" style="left:39.80px;top:280.20px;width:276.24px;background:#2f8ac8"></div>
<div class="dr" style="left:332.80px;top:280.20px;width:97.83px;background:#2f8ac8"></div>
<div class="dr mono" style="left:4.8px;top:280.20px;color:#686868">0190</div>
<div class="dr mono" style="left:39.8px;top:280.20px"><span style="color:#d8ecfa">00 </span><span style="color:#d8ecfa">00 </span><span style="color:#d8ecfa">00 </span><span style="color:#d8ecfa">00 </span><span style="color:#d8ecfa">00 </span><span style="color:#d8ecfa">00 </span><span style="color:#d8ecfa">00 </span><span style="color:#d8ecfa">00  </span><span style="color:#d8ecfa">00 </span><span style="color:#d8ecfa">00 </span><span style="color:#d8ecfa">00 </span><span style="color:#d8ecfa">00 </span><span style="color:#d8ecfa">00 </span><span style="color:#d8ecfa">00 </span><span style="color:#d8ecfa">00 </span><span style="color:#d8ecfa">00</span></div>
<div class="dr mono" style="left:332.8px;top:280.20px"><span style="color:#c8e0f4">·</span><span style="color:#c8e0f4">·</span><span style="color:#c8e0f4">·</span><span style="color:#c8e0f4">·</span><span style="color:#c8e0f4">·</span><span style="color:#c8e0f4">·</span><span style="color:#c8e0f4">·</span><span style="color:#c8e0f4">·</span><span style="color:#c8e0f4"> ·</span><span style="color:#c8e0f4">·</span><span style="color:#c8e0f4">·</span><span style="color:#c8e0f4">·</span><span style="color:#c8e0f4">·</span><span style="color:#c8e0f4">·</span><span style="color:#c8e0f4">·</span><span style="color:#c8e0f4">·</span></div>
<div class="dr" style="left:39.80px;top:291.40px;width:276.24px;background:#2f8ac8"></div>
<div class="dr" style="left:332.80px;top:291.40px;width:97.83px;background:#2f8ac8"></div>
<div class="dr mono" style="left:4.8px;top:291.40px;color:#686868">01a0</div>
<div class="dr mono" style="left:39.8px;top:291.40px"><span style="color:#d8ecfa">00 </span><span style="color:#d8ecfa">00 </span><span style="color:#d8ecfa">00 </span><span style="color:#d8ecfa">00 </span><span style="color:#d8ecfa">00 </span><span style="color:#d8ecfa">00 </span><span style="color:#d8ecfa">00 </span><span style="color:#d8ecfa">00  </span><span style="color:#d8ecfa">00 </span><span style="color:#d8ecfa">00 </span><span style="color:#d8ecfa">00 </span><span style="color:#d8ecfa">00 </span><span style="color:#d8ecfa">00 </span><span style="color:#d8ecfa">00 </span><span style="color:#d8ecfa">00 </span><span style="color:#d8ecfa">00</span></div>
<div class="dr mono" style="left:332.8px;top:291.40px"><span style="color:#c8e0f4">·</span><span style="color:#c8e0f4">·</span><span style="color:#c8e0f4">·</span><span style="color:#c8e0f4">·</span><span style="color:#c8e0f4">·</span><span style="color:#c8e0f4">·</span><span style="color:#c8e0f4">·</span><span style="color:#c8e0f4">·</span><span style="color:#c8e0f4"> ·</span><span style="color:#c8e0f4">·</span><span style="color:#c8e0f4">·</span><span style="color:#c8e0f4">·</span><span style="color:#c8e0f4">·</span><span style="color:#c8e0f4">·</span><span style="color:#c8e0f4">·</span><span style="color:#c8e0f4">·</span></div>
<div class="dr" style="left:39.80px;top:302.60px;width:276.24px;background:#2f8ac8"></div>
<div class="dr" style="left:332.80px;top:302.60px;width:97.83px;background:#2f8ac8"></div>
<div class="dr mono" style="left:4.8px;top:302.60px;color:#686868">01b0</div>
<div class="dr mono" style="left:39.8px;top:302.60px"><span style="color:#d8ecfa">00 </span><span style="color:#d8ecfa">00 </span><span style="color:#d8ecfa">00 </span><span style="color:#d8ecfa">00 </span><span style="color:#d8ecfa">00 </span><span style="color:#d8ecfa">00 </span><span style="color:#d8ecfa">00 </span><span style="color:#d8ecfa">00  </span><span style="color:#d8ecfa">00 </span><span style="color:#d8ecfa">00 </span><span style="color:#d8ecfa">00 </span><span style="color:#d8ecfa">00 </span><span style="color:#d8ecfa">00 </span><span style="color:#d8ecfa">00 </span><span style="color:#d8ecfa">00 </span><span style="color:#d8ecfa">00</span></div>
<div class="dr mono" style="left:332.8px;top:302.60px"><span style="color:#c8e0f4">·</span><span style="color:#c8e0f4">·</span><span style="color:#c8e0f4">·</span><span style="color:#c8e0f4">·</span><span style="color:#c8e0f4">·</span><span style="color:#c8e0f4">·</span><span style="color:#c8e0f4">·</span><span style="color:#c8e0f4">·</span><span style="color:#c8e0f4"> ·</span><span style="color:#c8e0f4">·</span><span style="color:#c8e0f4">·</span><span style="color:#c8e0f4">·</span><span style="color:#c8e0f4">·</span><span style="color:#c8e0f4">·</span><span style="color:#c8e0f4">·</span><span style="color:#c8e0f4">·</span></div>
<div class="dr" style="left:39.80px;top:313.80px;width:276.24px;background:#2f8ac8"></div>
<div class="dr" style="left:332.80px;top:313.80px;width:97.83px;background:#2f8ac8"></div>
<div class="dr mono" style="left:4.8px;top:313.80px;color:#686868">01c0</div>
<div class="dr mono" style="left:39.8px;top:313.80px"><span style="color:#d8ecfa">00 </span><span style="color:#d8ecfa">00 </span><span style="color:#d8ecfa">00 </span><span style="color:#d8ecfa">00 </span><span style="color:#d8ecfa">00 </span><span style="color:#d8ecfa">00 </span><span style="color:#d8ecfa">00 </span><span style="color:#d8ecfa">00  </span><span style="color:#d8ecfa">00 </span><span style="color:#d8ecfa">00 </span><span style="color:#d8ecfa">00 </span><span style="color:#d8ecfa">00 </span><span style="color:#d8ecfa">00 </span><span style="color:#d8ecfa">00 </span><span style="color:#d8ecfa">00 </span><span style="color:#d8ecfa">00</span></div>
<div class="dr mono" style="left:332.8px;top:313.80px"><span style="color:#c8e0f4">·</span><span style="color:#c8e0f4">·</span><span style="color:#c8e0f4">·</span><span style="color:#c8e0f4">·</span><span style="color:#c8e0f4">·</span><span style="color:#c8e0f4">·</span><span style="color:#c8e0f4">·</span><span style="color:#c8e0f4">·</span><span style="color:#c8e0f4"> ·</span><span style="color:#c8e0f4">·</span><span style="color:#c8e0f4">·</span><span style="color:#c8e0f4">·</span><span style="color:#c8e0f4">·</span><span style="color:#c8e0f4">·</span><span style="color:#c8e0f4">·</span><span style="color:#c8e0f4">·</span></div>
<div class="dr" style="left:39.80px;top:325.00px;width:276.24px;background:#2f8ac8"></div>
<div class="dr" style="left:332.80px;top:325.00px;width:97.83px;background:#2f8ac8"></div>
<div class="dr mono" style="left:4.8px;top:325.00px;color:#686868">01d0</div>
<div class="dr mono" style="left:39.8px;top:325.00px"><span style="color:#d8ecfa">00 </span><span style="color:#d8ecfa">00 </span><span style="color:#d8ecfa">00 </span><span style="color:#d8ecfa">00 </span><span style="color:#d8ecfa">00 </span><span style="color:#d8ecfa">00 </span><span style="color:#d8ecfa">00 </span><span style="color:#d8ecfa">00  </span><span style="color:#d8ecfa">00 </span><span style="color:#d8ecfa">00 </span><span style="color:#d8ecfa">00 </span><span style="color:#d8ecfa">00 </span><span style="color:#d8ecfa">00 </span><span style="color:#d8ecfa">00 </span><span style="color:#d8ecfa">00 </span><span style="color:#d8ecfa">00</span></div>
<div class="dr mono" style="left:332.8px;top:325.00px"><span style="color:#c8e0f4">·</span><span style="color:#c8e0f4">·</span><span style="color:#c8e0f4">·</span><span style="color:#c8e0f4">·</span><span style="color:#c8e0f4">·</span><span style="color:#c8e0f4">·</span><span style="color:#c8e0f4">·</span><span style="color:#c8e0f4">·</span><span style="color:#c8e0f4"> ·</span><span style="color:#c8e0f4">·</span><span style="color:#c8e0f4">·</span><span style="color:#c8e0f4">·</span><span style="color:#c8e0f4">·</span><span style="color:#c8e0f4">·</span><span style="color:#c8e0f4">·</span><span style="color:#c8e0f4">·</span></div>
<div class="dr" style="left:39.80px;top:336.20px;width:276.24px;background:#2f8ac8"></div>
<div class="dr" style="left:332.80px;top:336.20px;width:97.83px;background:#2f8ac8"></div>
<div class="dr mono" style="left:4.8px;top:336.20px;color:#686868">01e0</div>
<div class="dr mono" style="left:39.8px;top:336.20px"><span style="color:#d8ecfa">00 </span><span style="color:#d8ecfa">00 </span><span style="color:#d8ecfa">00 </span><span style="color:#d8ecfa">00 </span><span style="color:#d8ecfa">00 </span><span style="color:#d8ecfa">00 </span><span style="color:#d8ecfa">00 </span><span style="color:#d8ecfa">00  </span><span style="color:#d8ecfa">00 </span><span style="color:#d8ecfa">00 </span><span style="color:#d8ecfa">00 </span><span style="color:#d8ecfa">00 </span><span style="color:#d8ecfa">00 </span><span style="color:#d8ecfa">00 </span><span style="color:#d8ecfa">00 </span><span style="color:#d8ecfa">00</span></div>
<div class="dr mono" style="left:332.8px;top:336.20px"><span style="color:#c8e0f4">·</span><span style="color:#c8e0f4">·</span><span style="color:#c8e0f4">·</span><span style="color:#c8e0f4">·</span><span style="color:#c8e0f4">·</span><span style="color:#c8e0f4">·</span><span style="color:#c8e0f4">·</span><span style="color:#c8e0f4">·</span><span style="color:#c8e0f4"> ·</span><span style="color:#c8e0f4">·</span><span style="color:#c8e0f4">·</span><span style="color:#c8e0f4">·</span><span style="color:#c8e0f4">·</span><span style="color:#c8e0f4">·</span><span style="color:#c8e0f4">·</span><span style="color:#c8e0f4">·</span></div>
<div class="dr" style="left:39.80px;top:347.40px;width:276.24px;background:#2f8ac8"></div>
<div class="dr" style="left:332.80px;top:347.40px;width:97.83px;background:#2f8ac8"></div>
<div class="dr mono" style="left:4.8px;top:347.40px;color:#686868">01f0</div>
<div class="dr mono" style="left:39.8px;top:347.40px"><span style="color:#d8ecfa">00 </span><span style="color:#d8ecfa">00 </span><span style="color:#d8ecfa">00 </span><span style="color:#d8ecfa">00 </span><span style="color:#d8ecfa">00 </span><span style="color:#d8ecfa">00 </span><span style="color:#d8ecfa">00 </span><span style="color:#d8ecfa">00  </span><span style="color:#d8ecfa">00 </span><span style="color:#d8ecfa">00 </span><span style="color:#d8ecfa">00 </span><span style="color:#d8ecfa">00 </span><span style="color:#d8ecfa">00 </span><span style="color:#d8ecfa">00 </span><span style="color:#d8ecfa">00 </span><span style="color:#d8ecfa">00</span></div>
<div class="dr mono" style="left:332.8px;top:347.40px"><span style="color:#c8e0f4">·</span><span style="color:#c8e0f4">·</span><span style="color:#c8e0f4">·</span><span style="color:#c8e0f4">·</span><span style="color:#c8e0f4">·</span><span style="color:#c8e0f4">·</span><span style="color:#c8e0f4">·</span><span style="color:#c8e0f4">·</span><span style="color:#c8e0f4"> ·</span><span style="color:#c8e0f4">·</span><span style="color:#c8e0f4">·</span><span style="color:#c8e0f4">·</span><span style="color:#c8e0f4">·</span><span style="color:#c8e0f4">·</span><span style="color:#c8e0f4">·</span><span style="color:#c8e0f4">·</span></div>
<div class="dr" style="left:39.80px;top:358.60px;width:276.24px;background:#2f8ac8"></div>
<div class="dr" style="left:332.80px;top:358.60px;width:97.83px;background:#2f8ac8"></div>
<div class="dr mono" style="left:4.8px;top:358.60px;color:#686868">0200</div>
<div class="dr mono" style="left:39.8px;top:358.60px"><span style="color:#d8ecfa">00 </span><span style="color:#d8ecfa">00 </span><span style="color:#d8ecfa">00 </span><span style="color:#d8ecfa">00 </span><span style="color:#d8ecfa">00 </span><span style="color:#d8ecfa">00 </span><span style="color:#d8ecfa">00 </span><span style="color:#d8ecfa">00  </span><span style="color:#d8ecfa">00 </span><span style="color:#d8ecfa">00 </span><span style="color:#d8ecfa">00 </span><span style="color:#d8ecfa">00 </span><span style="color:#d8ecfa">00 </span><span style="color:#d8ecfa">00 </span><span style="color:#d8ecfa">00 </span><span style="color:#d8ecfa">00</span></div>
<div class="dr mono" style="left:332.8px;top:358.60px"><span style="color:#c8e0f4">·</span><span style="color:#c8e0f4">·</span><span style="color:#c8e0f4">·</span><span style="color:#c8e0f4">·</span><span style="color:#c8e0f4">·</span><span style="color:#c8e0f4">·</span><span style="color:#c8e0f4">·</span><span style="color:#c8e0f4">·</span><span style="color:#c8e0f4"> ·</span><span style="color:#c8e0f4">·</span><span style="color:#c8e0f4">·</span><span style="color:#c8e0f4">·</span><span style="color:#c8e0f4">·</span><span style="color:#c8e0f4">·</span><span style="color:#c8e0f4">·</span><span style="color:#c8e0f4">·</span></div>
<div class="dr" style="left:39.80px;top:369.80px;width:276.24px;background:#2f8ac8"></div>
<div class="dr" style="left:332.80px;top:369.80px;width:97.83px;background:#2f8ac8"></div>
<div class="dr mono" style="left:4.8px;top:369.80px;color:#686868">0210</div>
<div class="dr mono" style="left:39.8px;top:369.80px"><span style="color:#d8ecfa">00 </span><span style="color:#d8ecfa">00 </span><span style="color:#d8ecfa">00 </span><span style="color:#d8ecfa">00 </span><span style="color:#d8ecfa">00 </span><span style="color:#d8ecfa">00 </span><span style="color:#d8ecfa">00 </span><span style="color:#d8ecfa">00  </span><span style="color:#d8ecfa">00 </span><span style="color:#d8ecfa">00 </span><span style="color:#d8ecfa">00 </span><span style="color:#d8ecfa">00 </span><span style="color:#d8ecfa">00 </span><span style="color:#d8ecfa">00 </span><span style="color:#d8ecfa">00 </span><span style="color:#d8ecfa">00</span></div>
<div class="dr mono" style="left:332.8px;top:369.80px"><span style="color:#c8e0f4">·</span><span style="color:#c8e0f4">·</span><span style="color:#c8e0f4">·</span><span style="color:#c8e0f4">·</span><span style="color:#c8e0f4">·</span><span style="color:#c8e0f4">·</span><span style="color:#c8e0f4">·</span><span style="color:#c8e0f4">·</span><span style="color:#c8e0f4"> ·</span><span style="color:#c8e0f4">·</span><span style="color:#c8e0f4">·</span><span style="color:#c8e0f4">·</span><span style="color:#c8e0f4">·</span><span style="color:#c8e0f4">·</span><span style="color:#c8e0f4">·</span><span style="color:#c8e0f4">·</span></div>
<div class="dr" style="left:39.80px;top:381.00px;width:115.10px;background:#2f8ac8"></div>
<div class="dr" style="left:332.80px;top:381.00px;width:40.28px;background:#2f8ac8"></div>
<div class="dr mono" style="left:4.8px;top:381.00px;color:#686868">0220</div>
<div class="dr mono" style="left:39.8px;top:381.00px"><span style="color:#d8ecfa">00 </span><span style="color:#d8ecfa">00 </span><span style="color:#d8ecfa">00 </span><span style="color:#d8ecfa">00 </span><span style="color:#d8ecfa">00 </span><span style="color:#d8ecfa">00 </span><span style="color:#d8ecfa">00</span></div>
<div class="dr mono" style="left:332.8px;top:381.00px"><span style="color:#c8e0f4">·</span><span style="color:#c8e0f4">·</span><span style="color:#c8e0f4">·</span><span style="color:#c8e0f4">·</span><span style="color:#c8e0f4">·</span><span style="color:#c8e0f4">·</span><span style="color:#c8e0f4">·</span></div>
</div>
<div class="abs" style="left:1136px;top:811px;width:188px;height:18.5px;background:#e4e4e4;border:1px solid #c8c8c8;border-top:none;border-radius:0 0 2px 2px"></div>
<div class="abs" style="left:1028.5px;top:811.5px;width:108px;height:19.5px;background:#fff;border:1px solid #c0c0c0;border-top:none;border-radius:0 0 3px 3px"></div>
<div class="abs" style="left:1037.2px;top:814.5px;font-size:11.05px;line-height:13px;color:#1c1c1c">Frame (551 bytes)</div>
<div class="abs" style="left:1145.3px;top:813.8px;font-size:10.42px;line-height:13px;color:#1c1c1c">Unaligned OCTET STRING (8 bytes)</div>
<svg class="abs" style="left:7px;top:835px" width="13" height="13" viewBox="0 0 13 13"><defs><radialGradient id="rg" cx="0.4" cy="0.35" r="0.7"><stop offset="0" stop-color="#f08a8a"/><stop offset="1" stop-color="#d83a3a"/></radialGradient></defs><circle cx="6.3" cy="6.2" r="5.2" fill="url(#rg)" stroke="#8a2a2a" stroke-width="0.8"/></svg>
<svg class="abs" style="left:26.5px;top:834.5px" width="13" height="13" viewBox="0 0 13 13"><rect x="0.6" y="1.2" width="8.6" height="10.8" fill="#efefe8" stroke="#cfcfc8" stroke-width="0.6"/><path d="M0.8,1.2 L9,1.2 L9,3.6 L7,3.2 L5.5,4.2 L3.5,3 L0.8,3.8 Z" fill="#2f9be0"/><path d="M1.8,5.5 L7.5,5.5 M1.8,8 L7.5,8 M1.8,10.5 L7.5,10.5" stroke="#c8c8c0" stroke-width="0.5"/><path d="M4,9.6 L11.2,1.6" stroke="#3a3a3a" stroke-width="2.2" stroke-linecap="round"/><path d="M3,11 L3.6,8.8 L5,10.2 Z" fill="#222"/></svg>
<div class="abs" style="left:50px;top:835.5px;font-size:10.6px;line-height:13px;color:#1c1c1c">MAC-LTE (mac-lte), 517 bytes</div>
<div class="abs" style="left:1012.5px;top:836px;width:0;height:11px;border-left:1px dotted #c4c4c4"></div>
<div class="abs" style="left:1021.5px;top:835.5px;font-size:10.85px;line-height:13px;color:#1c1c1c">Packets: 271 · Displayed: 271 (100.0%)</div>
<div class="abs" style="left:1432.5px;top:836px;width:0;height:11px;border-left:1px dotted #c4c4c4"></div>
<div class="abs" style="left:1533px;top:840px;width:1px;height:1px;background:#b8b8b8"></div>
<div class="abs" style="left:1530px;top:843px;width:1px;height:1px;background:#b8b8b8"></div>
<div class="abs" style="left:1533px;top:843px;width:1px;height:1px;background:#b8b8b8"></div>
<div class="abs" style="left:1527px;top:846px;width:1px;height:1px;background:#b8b8b8"></div>
<div class="abs" style="left:1530px;top:846px;width:1px;height:1px;background:#b8b8b8"></div>
<div class="abs" style="left:1533px;top:846px;width:1px;height:1px;background:#b8b8b8"></div>
<div class="abs" style="left:1442.5px;top:835.5px;font-size:10.7px;line-height:13px;color:#1c1c1c">Profile: Default</div>
</body></html>
